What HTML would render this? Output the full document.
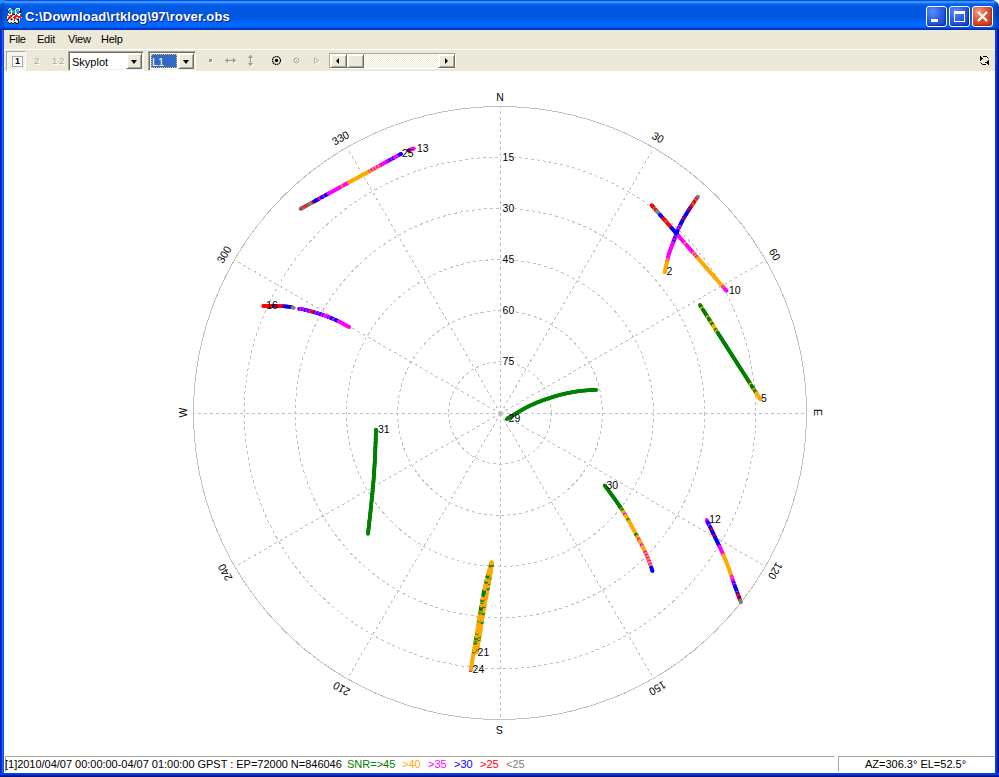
<!DOCTYPE html>
<html>
<head>
<meta charset="utf-8">
<title>rover.obs</title>
<style>
html,body{margin:0;padding:0;background:#fff;}
body{width:999px;height:777px;position:relative;overflow:hidden;font-family:"Liberation Sans",sans-serif;font-size:11px;color:#000;}
.abs{position:absolute;}
/* window frame */
#title{left:0;top:0;width:999px;height:30px;border-radius:7px 7px 0 0;
 background:linear-gradient(to bottom,#0a4ee0 0.5px,#3c92ff 1.5px,#3a94ff 2.5px,#0f72f8 3.5px,#0464f0 4.5px,#025ee8 5.5px,#005ae4 6.5px,#0058e1 7.5px,#0058e1 8.5px,#0058e1 9.5px,#0058e1 10.5px,#0058e1 11.5px,#0058e1 12.5px,#0058e1 13.5px,#0058e1 14.5px,#0058e1 15.5px,#0058e1 16.5px,#0058e1 17.5px,#005ae8 18.5px,#005ef0 19.5px,#0062f8 20.5px,#0066ff 21.5px,#0066ff 22.5px,#0066ff 23.5px,#0066ff 24.5px,#0066ff 25.5px,#0063fb 26.5px,#0054e8 27.5px,#003cd0 28.5px,#0030b4 29.5px);}
#title:after{content:"";position:absolute;left:0;top:0;width:999px;height:30px;border-radius:7px 7px 0 0;
 background:linear-gradient(to right,rgba(0,40,150,.55) 0px,rgba(0,40,150,0) 6px,rgba(0,40,150,0) 993px,rgba(0,30,130,.6) 999px);}
#bl{left:0;top:30px;width:4px;height:747px;background:linear-gradient(to right,#0019cf 0 1px,#0831d9 1px 2px,#166aee 2px 3px,#0855dd 3px 4px);}
#br{left:995px;top:30px;width:4px;height:747px;background:linear-gradient(to right,#0a40ea 0 1px,#0838e0 1px 2px,#0020b0 2px 3px,#00138c 3px 4px);}
#bb{left:0;top:773px;width:999px;height:4px;background:linear-gradient(to bottom,#0a40ea 0 1px,#0838e0 1px 2px,#0020b0 2px 3px,#00138c 3px 4px);}
#ttext{left:25px;top:8px;height:18px;line-height:18px;color:#fff;font-weight:bold;font-size:13px;white-space:nowrap;text-shadow:1px 1px 0 #0a1883;letter-spacing:0.18px;}
.cb{top:6px;width:21px;height:21px;box-sizing:border-box;border:1px solid #fff;border-radius:3px;
 background:radial-gradient(circle at 30% 25%,#5f8dff 0%,#2b5fe6 45%,#1a44c8 100%);box-shadow:inset -1px -1px 2px rgba(0,10,120,.6);}
#close{background:radial-gradient(circle at 30% 25%,#f0a088 0%,#dd5230 45%,#c23a12 100%);box-shadow:inset -1px -1px 2px rgba(120,20,0,.6);}
/* menu / toolbar */
#menu{left:4px;top:30px;width:991px;height:19px;background:#ece9d8;}
#menu span{position:absolute;top:3px;line-height:13px;letter-spacing:-0.25px;}
#wl{left:4px;top:49px;width:991px;height:1px;background:#fff;}
#tool{left:4px;top:50px;width:991px;height:21px;background:#ece9d8;}
.sunk{box-sizing:border-box;border:1px solid;border-color:#aca899 #fff #fff #aca899;}
.combo{box-sizing:border-box;background:#fff;border:1px solid;border-color:#aca899 #fff #fff #aca899;box-shadow:inset 1px 1px 0 #716f64,inset -1px -1px 0 #f1efe2;}
.btn3d{box-sizing:border-box;background:#ece9d8;border:1px solid;border-color:#fff #716f64 #716f64 #fff;box-shadow:inset 1px 1px 0 #fff,inset -1px -1px 0 #aca899;}
.dither{background-image:conic-gradient(#fff 25%,#ece9d8 0 50%,#fff 0 75%,#ece9d8 0);background-size:2px 2px;}
/* status */
#status{left:4px;top:756px;width:991px;height:17px;background:#fff;}
.sp{box-sizing:border-box;top:0;height:16px;border:1px solid;border-color:#aca899 #fff #fff #aca899;line-height:13px;white-space:nowrap;}
.st{top:2px;line-height:13px;white-space:nowrap;}
svg.plot{position:absolute;left:0;top:0;}
</style>
</head>
<body>
<svg class="plot" width="999" height="777" viewBox="0 0 999 777"><g shape-rendering="crispEdges"><circle cx="500" cy="413" r="255.83" fill="none" stroke="#c0c0c0" stroke-width="1" stroke-dasharray="3 3"/><circle cx="500" cy="413" r="204.67" fill="none" stroke="#c0c0c0" stroke-width="1" stroke-dasharray="3 3"/><circle cx="500" cy="413" r="153.50" fill="none" stroke="#c0c0c0" stroke-width="1" stroke-dasharray="3 3"/><circle cx="500" cy="413" r="102.33" fill="none" stroke="#c0c0c0" stroke-width="1" stroke-dasharray="3 3"/><circle cx="500" cy="413" r="51.17" fill="none" stroke="#c0c0c0" stroke-width="1" stroke-dasharray="3 3"/><line x1="500.5" y1="413.5" x2="500.50" y2="107.00" stroke="#c0c0c0" stroke-width="1" stroke-dasharray="3 3"/><line x1="500.5" y1="413.5" x2="653.75" y2="148.06" stroke="#c0c0c0" stroke-width="1" stroke-dasharray="3 3"/><line x1="500.5" y1="413.5" x2="765.94" y2="260.25" stroke="#c0c0c0" stroke-width="1" stroke-dasharray="3 3"/><line x1="500.5" y1="413.5" x2="807.00" y2="413.50" stroke="#c0c0c0" stroke-width="1" stroke-dasharray="3 3"/><line x1="500.5" y1="413.5" x2="765.94" y2="566.75" stroke="#c0c0c0" stroke-width="1" stroke-dasharray="3 3"/><line x1="500.5" y1="413.5" x2="653.75" y2="678.94" stroke="#c0c0c0" stroke-width="1" stroke-dasharray="3 3"/><line x1="500.5" y1="413.5" x2="500.50" y2="720.00" stroke="#c0c0c0" stroke-width="1" stroke-dasharray="3 3"/><line x1="500.5" y1="413.5" x2="347.25" y2="678.94" stroke="#c0c0c0" stroke-width="1" stroke-dasharray="3 3"/><line x1="500.5" y1="413.5" x2="235.06" y2="566.75" stroke="#c0c0c0" stroke-width="1" stroke-dasharray="3 3"/><line x1="500.5" y1="413.5" x2="194.00" y2="413.50" stroke="#c0c0c0" stroke-width="1" stroke-dasharray="3 3"/><line x1="500.5" y1="413.5" x2="235.06" y2="260.25" stroke="#c0c0c0" stroke-width="1" stroke-dasharray="3 3"/><line x1="500.5" y1="413.5" x2="347.25" y2="148.06" stroke="#c0c0c0" stroke-width="1" stroke-dasharray="3 3"/><circle cx="500" cy="413" r="306.5" fill="none" stroke="#c0c0c0" stroke-width="1"/></g><circle cx="500.5" cy="413.5" r="2.5" fill="#c0c0c0"/><g><circle cx="300.5" cy="208.9" r="1.9" fill="#808080"/><circle cx="301.2" cy="208.5" r="1.9" fill="#808080"/><circle cx="301.9" cy="208.1" r="1.9" fill="#ff0000"/><circle cx="302.6" cy="207.7" r="1.9" fill="#ff0000"/><circle cx="303.3" cy="207.4" r="1.9" fill="#808080"/><circle cx="304.0" cy="207.0" r="1.9" fill="#808080"/><circle cx="304.7" cy="206.6" r="1.9" fill="#ff0000"/><circle cx="305.4" cy="206.2" r="1.9" fill="#808080"/><circle cx="306.1" cy="205.8" r="1.9" fill="#ff0000"/><circle cx="306.8" cy="205.4" r="1.9" fill="#ff0000"/><circle cx="307.5" cy="205.0" r="1.9" fill="#808080"/><circle cx="308.2" cy="204.7" r="1.9" fill="#808080"/><circle cx="308.9" cy="204.3" r="1.9" fill="#ff0000"/><circle cx="309.6" cy="203.9" r="1.9" fill="#808080"/><circle cx="310.3" cy="203.5" r="1.9" fill="#808080"/><circle cx="311.1" cy="203.1" r="1.9" fill="#808080"/><circle cx="311.8" cy="202.7" r="1.9" fill="#808080"/><circle cx="312.5" cy="202.3" r="1.9" fill="#808080"/><circle cx="313.2" cy="202.0" r="1.9" fill="#ff0000"/><circle cx="313.9" cy="201.6" r="1.9" fill="#ff0000"/><circle cx="314.6" cy="201.2" r="1.9" fill="#0000ff"/><circle cx="315.3" cy="200.8" r="1.9" fill="#0000ff"/><circle cx="316.0" cy="200.4" r="1.9" fill="#0000ff"/><circle cx="316.7" cy="200.0" r="1.9" fill="#0000ff"/><circle cx="317.4" cy="199.7" r="1.9" fill="#0000ff"/><circle cx="318.1" cy="199.3" r="1.9" fill="#0000ff"/><circle cx="318.8" cy="198.9" r="1.9" fill="#0000ff"/><circle cx="319.5" cy="198.5" r="1.9" fill="#ff0000"/><circle cx="320.2" cy="198.1" r="1.9" fill="#ff00ff"/><circle cx="320.9" cy="197.7" r="1.9" fill="#ff00ff"/><circle cx="321.6" cy="197.3" r="1.9" fill="#0000ff"/><circle cx="322.3" cy="197.0" r="1.9" fill="#0000ff"/><circle cx="323.0" cy="196.6" r="1.9" fill="#0000ff"/><circle cx="323.7" cy="196.2" r="1.9" fill="#0000ff"/><circle cx="324.4" cy="195.8" r="1.9" fill="#ff00ff"/><circle cx="325.1" cy="195.4" r="1.9" fill="#ff00ff"/><circle cx="325.8" cy="195.0" r="1.9" fill="#0000ff"/><circle cx="326.5" cy="194.6" r="1.9" fill="#0000ff"/><circle cx="327.2" cy="194.3" r="1.9" fill="#0000ff"/><circle cx="327.9" cy="193.9" r="1.9" fill="#0000ff"/><circle cx="328.6" cy="193.5" r="1.9" fill="#ff00ff"/><circle cx="329.3" cy="193.1" r="1.9" fill="#ff00ff"/><circle cx="330.0" cy="192.7" r="1.9" fill="#ff00ff"/><circle cx="330.8" cy="192.3" r="1.9" fill="#ff00ff"/><circle cx="331.5" cy="191.9" r="1.9" fill="#ff00ff"/><circle cx="332.2" cy="191.6" r="1.9" fill="#ff00ff"/><circle cx="332.9" cy="191.2" r="1.9" fill="#ff00ff"/><circle cx="333.6" cy="190.8" r="1.9" fill="#ff00ff"/><circle cx="334.3" cy="190.4" r="1.9" fill="#ff00ff"/><circle cx="335.0" cy="190.0" r="1.9" fill="#ff00ff"/><circle cx="335.7" cy="189.6" r="1.9" fill="#ff00ff"/><circle cx="336.4" cy="189.2" r="1.9" fill="#ff00ff"/><circle cx="337.1" cy="188.9" r="1.9" fill="#ff00ff"/><circle cx="337.8" cy="188.5" r="1.9" fill="#ff00ff"/><circle cx="338.5" cy="188.1" r="1.9" fill="#ff00ff"/><circle cx="339.2" cy="187.7" r="1.9" fill="#ff00ff"/><circle cx="339.9" cy="187.3" r="1.9" fill="#ff00ff"/><circle cx="340.6" cy="186.9" r="1.9" fill="#ff00ff"/><circle cx="341.3" cy="186.6" r="1.9" fill="#ff00ff"/><circle cx="342.0" cy="186.2" r="1.9" fill="#ff00ff"/><circle cx="342.7" cy="185.8" r="1.9" fill="#ffaa00"/><circle cx="343.4" cy="185.4" r="1.9" fill="#ffaa00"/><circle cx="344.1" cy="185.0" r="1.9" fill="#ff00ff"/><circle cx="344.8" cy="184.6" r="1.9" fill="#ff00ff"/><circle cx="345.5" cy="184.2" r="1.9" fill="#ff00ff"/><circle cx="346.2" cy="183.9" r="1.9" fill="#ff00ff"/><circle cx="346.9" cy="183.5" r="1.9" fill="#ff00ff"/><circle cx="347.6" cy="183.1" r="1.9" fill="#ff00ff"/><circle cx="348.3" cy="182.7" r="1.9" fill="#ff00ff"/><circle cx="349.0" cy="182.3" r="1.9" fill="#ffaa00"/><circle cx="349.7" cy="181.9" r="1.9" fill="#ffaa00"/><circle cx="350.4" cy="181.5" r="1.9" fill="#ffaa00"/><circle cx="351.2" cy="181.2" r="1.9" fill="#ffaa00"/><circle cx="351.9" cy="180.8" r="1.9" fill="#ffaa00"/><circle cx="352.6" cy="180.4" r="1.9" fill="#ffaa00"/><circle cx="353.3" cy="180.0" r="1.9" fill="#ffaa00"/><circle cx="354.0" cy="179.6" r="1.9" fill="#ffaa00"/><circle cx="354.7" cy="179.2" r="1.9" fill="#ffaa00"/><circle cx="355.4" cy="178.8" r="1.9" fill="#ffaa00"/><circle cx="356.1" cy="178.5" r="1.9" fill="#ffaa00"/><circle cx="356.8" cy="178.1" r="1.9" fill="#ffaa00"/><circle cx="357.5" cy="177.7" r="1.9" fill="#ffaa00"/><circle cx="358.2" cy="177.3" r="1.9" fill="#ffaa00"/><circle cx="358.9" cy="176.9" r="1.9" fill="#ffaa00"/><circle cx="359.6" cy="176.5" r="1.9" fill="#ffaa00"/><circle cx="360.3" cy="176.1" r="1.9" fill="#ffaa00"/><circle cx="361.0" cy="175.8" r="1.9" fill="#ffaa00"/><circle cx="361.7" cy="175.4" r="1.9" fill="#ffaa00"/><circle cx="362.4" cy="175.0" r="1.9" fill="#ffaa00"/><circle cx="363.1" cy="174.6" r="1.9" fill="#ffaa00"/><circle cx="363.8" cy="174.2" r="1.9" fill="#ffaa00"/><circle cx="364.5" cy="173.8" r="1.9" fill="#ffaa00"/><circle cx="365.2" cy="173.5" r="1.9" fill="#ffaa00"/><circle cx="365.9" cy="173.1" r="1.9" fill="#ffaa00"/><circle cx="366.6" cy="172.7" r="1.9" fill="#ffaa00"/><circle cx="367.3" cy="172.3" r="1.9" fill="#ffaa00"/><circle cx="368.0" cy="171.9" r="1.9" fill="#ffaa00"/><circle cx="368.7" cy="171.5" r="1.9" fill="#ffaa00"/><circle cx="369.4" cy="171.1" r="1.9" fill="#ffaa00"/><circle cx="370.1" cy="170.8" r="1.9" fill="#ff00ff"/><circle cx="370.8" cy="170.4" r="1.9" fill="#ffaa00"/><circle cx="371.6" cy="170.0" r="1.9" fill="#ffaa00"/><circle cx="372.3" cy="169.6" r="1.9" fill="#ff00ff"/><circle cx="373.0" cy="169.2" r="1.9" fill="#ff00ff"/><circle cx="373.7" cy="168.8" r="1.9" fill="#ffaa00"/><circle cx="374.4" cy="168.4" r="1.9" fill="#ffaa00"/><circle cx="375.1" cy="168.1" r="1.9" fill="#ff00ff"/><circle cx="375.8" cy="167.7" r="1.9" fill="#ff00ff"/><circle cx="376.5" cy="167.3" r="1.9" fill="#ffaa00"/><circle cx="377.2" cy="166.9" r="1.9" fill="#ffaa00"/><circle cx="377.9" cy="166.5" r="1.9" fill="#ff00ff"/><circle cx="378.6" cy="166.1" r="1.9" fill="#ff00ff"/><circle cx="379.3" cy="165.7" r="1.9" fill="#ffaa00"/><circle cx="380.0" cy="165.4" r="1.9" fill="#ffaa00"/><circle cx="380.7" cy="165.0" r="1.9" fill="#ff00ff"/><circle cx="381.4" cy="164.6" r="1.9" fill="#ff00ff"/><circle cx="382.1" cy="164.2" r="1.9" fill="#ff00ff"/><circle cx="382.8" cy="163.8" r="1.9" fill="#ff00ff"/><circle cx="383.5" cy="163.4" r="1.9" fill="#ff00ff"/><circle cx="384.2" cy="163.0" r="1.9" fill="#ff00ff"/><circle cx="384.9" cy="162.7" r="1.9" fill="#ff00ff"/><circle cx="385.6" cy="162.3" r="1.9" fill="#ff00ff"/><circle cx="386.3" cy="161.9" r="1.9" fill="#ff00ff"/><circle cx="387.0" cy="161.5" r="1.9" fill="#ff00ff"/><circle cx="387.7" cy="161.1" r="1.9" fill="#ff00ff"/><circle cx="388.4" cy="160.7" r="1.9" fill="#0000ff"/><circle cx="389.1" cy="160.4" r="1.9" fill="#ff00ff"/><circle cx="389.8" cy="160.0" r="1.9" fill="#ff00ff"/><circle cx="390.5" cy="159.6" r="1.9" fill="#0000ff"/><circle cx="391.3" cy="159.2" r="1.9" fill="#0000ff"/><circle cx="392.0" cy="158.8" r="1.9" fill="#ff00ff"/><circle cx="392.7" cy="158.4" r="1.9" fill="#ff00ff"/><circle cx="393.4" cy="158.0" r="1.9" fill="#0000ff"/><circle cx="394.1" cy="157.7" r="1.9" fill="#0000ff"/><circle cx="394.8" cy="157.3" r="1.9" fill="#ff00ff"/><circle cx="395.5" cy="156.9" r="1.9" fill="#ff00ff"/><circle cx="396.2" cy="156.5" r="1.9" fill="#ff00ff"/><circle cx="396.9" cy="156.1" r="1.9" fill="#ff00ff"/><circle cx="397.6" cy="155.7" r="1.9" fill="#ff00ff"/><circle cx="398.3" cy="155.3" r="1.9" fill="#ff00ff"/><circle cx="399.0" cy="155.0" r="1.9" fill="#ff00ff"/><circle cx="399.7" cy="154.6" r="1.9" fill="#0000ff"/><circle cx="400.4" cy="154.2" r="1.9" fill="#0000ff"/><circle cx="401.1" cy="153.8" r="1.9" fill="#0000ff"/><circle cx="408.6" cy="150.4" r="1.9" fill="#0000ff"/><circle cx="409.4" cy="150.1" r="1.9" fill="#0000ff"/><circle cx="410.1" cy="149.8" r="1.9" fill="#ff0000"/><circle cx="410.9" cy="149.5" r="1.9" fill="#ff0000"/><circle cx="411.6" cy="149.3" r="1.9" fill="#ff00ff"/><circle cx="412.4" cy="149.0" r="1.9" fill="#ff00ff"/><circle cx="413.1" cy="148.7" r="1.9" fill="#ff00ff"/><circle cx="413.9" cy="148.4" r="1.9" fill="#ff00ff"/><circle cx="263.2" cy="306.0" r="1.9" fill="#ff0000"/><circle cx="264.0" cy="306.0" r="1.9" fill="#ff0000"/><circle cx="264.8" cy="306.0" r="1.9" fill="#ff0000"/><circle cx="265.6" cy="306.0" r="1.9" fill="#ff0000"/><circle cx="266.4" cy="306.0" r="1.9" fill="#ff0000"/><circle cx="267.2" cy="306.0" r="1.9" fill="#ff0000"/><circle cx="268.1" cy="306.0" r="1.9" fill="#ff0000"/><circle cx="268.9" cy="306.0" r="1.9" fill="#ff0000"/><circle cx="269.7" cy="306.0" r="1.9" fill="#ff0000"/><circle cx="270.5" cy="306.0" r="1.9" fill="#ff0000"/><circle cx="271.3" cy="306.0" r="1.9" fill="#ff0000"/><circle cx="272.1" cy="306.0" r="1.9" fill="#ff0000"/><circle cx="272.9" cy="306.0" r="1.9" fill="#ff0000"/><circle cx="273.7" cy="306.0" r="1.9" fill="#0000ff"/><circle cx="274.5" cy="306.0" r="1.9" fill="#0000ff"/><circle cx="275.3" cy="306.0" r="1.9" fill="#0000ff"/><circle cx="276.1" cy="306.1" r="1.9" fill="#ff0000"/><circle cx="277.0" cy="306.1" r="1.9" fill="#ff0000"/><circle cx="277.8" cy="306.1" r="1.9" fill="#ff0000"/><circle cx="278.6" cy="306.1" r="1.9" fill="#ff0000"/><circle cx="279.4" cy="306.1" r="1.9" fill="#ff0000"/><circle cx="280.2" cy="306.1" r="1.9" fill="#ff0000"/><circle cx="281.0" cy="306.2" r="1.9" fill="#ff0000"/><circle cx="281.8" cy="306.2" r="1.9" fill="#ff0000"/><circle cx="282.6" cy="306.2" r="1.9" fill="#ff0000"/><circle cx="283.4" cy="306.2" r="1.9" fill="#ff0000"/><circle cx="284.2" cy="306.3" r="1.9" fill="#0000ff"/><circle cx="285.0" cy="306.4" r="1.9" fill="#0000ff"/><circle cx="285.8" cy="306.4" r="1.9" fill="#0000ff"/><circle cx="286.6" cy="306.5" r="1.9" fill="#0000ff"/><circle cx="287.5" cy="306.6" r="1.9" fill="#0000ff"/><circle cx="288.3" cy="306.7" r="1.9" fill="#0000ff"/><circle cx="289.1" cy="306.8" r="1.9" fill="#0000ff"/><circle cx="289.9" cy="306.9" r="1.9" fill="#0000ff"/><circle cx="290.7" cy="307.0" r="1.9" fill="#0000ff"/><circle cx="291.4" cy="307.2" r="1.9" fill="#0000ff"/><circle cx="292.2" cy="307.4" r="1.9" fill="#ff0000"/><circle cx="293.0" cy="307.6" r="1.9" fill="#808080"/><circle cx="293.8" cy="307.8" r="1.9" fill="#808080"/><circle cx="299.2" cy="308.8" r="1.9" fill="#0000ff"/><circle cx="300.0" cy="308.9" r="1.9" fill="#0000ff"/><circle cx="300.8" cy="308.9" r="1.9" fill="#ff00ff"/><circle cx="301.6" cy="309.1" r="1.9" fill="#ff00ff"/><circle cx="302.4" cy="309.2" r="1.9" fill="#ff00ff"/><circle cx="303.1" cy="309.4" r="1.9" fill="#0000ff"/><circle cx="303.9" cy="309.6" r="1.9" fill="#ff00ff"/><circle cx="304.7" cy="309.8" r="1.9" fill="#ff00ff"/><circle cx="305.5" cy="309.9" r="1.9" fill="#0000ff"/><circle cx="306.2" cy="310.1" r="1.9" fill="#0000ff"/><circle cx="307.0" cy="310.3" r="1.9" fill="#ff00ff"/><circle cx="307.8" cy="310.5" r="1.9" fill="#ff00ff"/><circle cx="308.6" cy="310.7" r="1.9" fill="#0000ff"/><circle cx="309.3" cy="310.9" r="1.9" fill="#0000ff"/><circle cx="310.1" cy="311.1" r="1.9" fill="#ff00ff"/><circle cx="310.9" cy="311.3" r="1.9" fill="#ff00ff"/><circle cx="311.7" cy="311.5" r="1.9" fill="#ff0000"/><circle cx="312.4" cy="311.7" r="1.9" fill="#ff0000"/><circle cx="313.2" cy="311.9" r="1.9" fill="#ff0000"/><circle cx="314.0" cy="312.1" r="1.9" fill="#ff0000"/><circle cx="314.7" cy="312.4" r="1.9" fill="#0000ff"/><circle cx="315.5" cy="312.6" r="1.9" fill="#0000ff"/><circle cx="316.3" cy="312.8" r="1.9" fill="#ff00ff"/><circle cx="317.0" cy="313.0" r="1.9" fill="#ff00ff"/><circle cx="317.8" cy="313.3" r="1.9" fill="#0000ff"/><circle cx="318.5" cy="313.5" r="1.9" fill="#0000ff"/><circle cx="319.3" cy="313.7" r="1.9" fill="#ff00ff"/><circle cx="320.1" cy="314.0" r="1.9" fill="#ff00ff"/><circle cx="320.8" cy="314.2" r="1.9" fill="#0000ff"/><circle cx="321.6" cy="314.5" r="1.9" fill="#0000ff"/><circle cx="322.3" cy="314.7" r="1.9" fill="#ff00ff"/><circle cx="323.1" cy="315.0" r="1.9" fill="#ff00ff"/><circle cx="323.8" cy="315.2" r="1.9" fill="#0000ff"/><circle cx="324.6" cy="315.5" r="1.9" fill="#ff00ff"/><circle cx="325.3" cy="315.8" r="1.9" fill="#ff00ff"/><circle cx="326.1" cy="316.0" r="1.9" fill="#ff00ff"/><circle cx="326.8" cy="316.3" r="1.9" fill="#ff00ff"/><circle cx="327.6" cy="316.6" r="1.9" fill="#ff00ff"/><circle cx="328.3" cy="316.9" r="1.9" fill="#ff00ff"/><circle cx="329.1" cy="317.2" r="1.9" fill="#0000ff"/><circle cx="329.8" cy="317.5" r="1.9" fill="#ff00ff"/><circle cx="330.5" cy="317.8" r="1.9" fill="#ff00ff"/><circle cx="331.3" cy="318.1" r="1.9" fill="#0000ff"/><circle cx="332.0" cy="318.4" r="1.9" fill="#0000ff"/><circle cx="332.8" cy="318.7" r="1.9" fill="#0000ff"/><circle cx="333.5" cy="319.0" r="1.9" fill="#0000ff"/><circle cx="334.2" cy="319.3" r="1.9" fill="#ff00ff"/><circle cx="335.0" cy="319.6" r="1.9" fill="#ff00ff"/><circle cx="335.7" cy="320.0" r="1.9" fill="#0000ff"/><circle cx="336.4" cy="320.3" r="1.9" fill="#0000ff"/><circle cx="337.1" cy="320.6" r="1.9" fill="#0000ff"/><circle cx="337.9" cy="321.0" r="1.9" fill="#0000ff"/><circle cx="338.6" cy="321.3" r="1.9" fill="#ff00ff"/><circle cx="339.3" cy="321.7" r="1.9" fill="#ff00ff"/><circle cx="340.0" cy="322.0" r="1.9" fill="#ff00ff"/><circle cx="340.7" cy="322.4" r="1.9" fill="#ff00ff"/><circle cx="341.4" cy="322.8" r="1.9" fill="#ff00ff"/><circle cx="342.1" cy="323.1" r="1.9" fill="#ff00ff"/><circle cx="342.8" cy="323.5" r="1.9" fill="#ff00ff"/><circle cx="343.5" cy="323.9" r="1.9" fill="#ff00ff"/><circle cx="344.2" cy="324.3" r="1.9" fill="#ff00ff"/><circle cx="344.9" cy="324.7" r="1.9" fill="#ff00ff"/><circle cx="345.6" cy="325.1" r="1.9" fill="#ff00ff"/><circle cx="346.3" cy="325.5" r="1.9" fill="#ff00ff"/><circle cx="347.0" cy="325.8" r="1.9" fill="#ff00ff"/><circle cx="347.7" cy="326.2" r="1.9" fill="#ff00ff"/><circle cx="348.4" cy="326.6" r="1.9" fill="#ff00ff"/><circle cx="349.1" cy="327.0" r="1.9" fill="#ff00ff"/><circle cx="697.9" cy="196.6" r="1.9" fill="#808080"/><circle cx="697.4" cy="197.2" r="1.9" fill="#808080"/><circle cx="696.9" cy="197.9" r="1.9" fill="#808080"/><circle cx="696.5" cy="198.5" r="1.9" fill="#808080"/><circle cx="696.0" cy="199.2" r="1.9" fill="#ff0000"/><circle cx="695.5" cy="199.8" r="1.9" fill="#ff0000"/><circle cx="695.1" cy="200.5" r="1.9" fill="#808080"/><circle cx="694.6" cy="201.2" r="1.9" fill="#808080"/><circle cx="694.2" cy="201.8" r="1.9" fill="#ff0000"/><circle cx="693.7" cy="202.5" r="1.9" fill="#ff0000"/><circle cx="693.3" cy="203.2" r="1.9" fill="#ff0000"/><circle cx="692.8" cy="203.8" r="1.9" fill="#ff0000"/><circle cx="692.4" cy="204.5" r="1.9" fill="#808080"/><circle cx="692.0" cy="205.2" r="1.9" fill="#808080"/><circle cx="691.5" cy="205.8" r="1.9" fill="#ff0000"/><circle cx="691.1" cy="206.5" r="1.9" fill="#ff0000"/><circle cx="690.6" cy="207.2" r="1.9" fill="#ff0000"/><circle cx="690.2" cy="207.8" r="1.9" fill="#ff0000"/><circle cx="689.7" cy="208.5" r="1.9" fill="#0000ff"/><circle cx="689.3" cy="209.2" r="1.9" fill="#0000ff"/><circle cx="688.9" cy="209.9" r="1.9" fill="#ff0000"/><circle cx="688.4" cy="210.5" r="1.9" fill="#ff0000"/><circle cx="688.0" cy="211.2" r="1.9" fill="#0000ff"/><circle cx="687.6" cy="211.9" r="1.9" fill="#0000ff"/><circle cx="687.1" cy="212.6" r="1.9" fill="#ff0000"/><circle cx="686.7" cy="213.2" r="1.9" fill="#0000ff"/><circle cx="686.3" cy="213.9" r="1.9" fill="#0000ff"/><circle cx="685.9" cy="214.6" r="1.9" fill="#0000ff"/><circle cx="685.5" cy="215.3" r="1.9" fill="#0000ff"/><circle cx="685.1" cy="216.0" r="1.9" fill="#0000ff"/><circle cx="684.6" cy="216.7" r="1.9" fill="#0000ff"/><circle cx="684.2" cy="217.4" r="1.9" fill="#ff0000"/><circle cx="683.8" cy="218.0" r="1.9" fill="#0000ff"/><circle cx="683.4" cy="218.7" r="1.9" fill="#0000ff"/><circle cx="683.0" cy="219.4" r="1.9" fill="#ff0000"/><circle cx="682.6" cy="220.2" r="1.9" fill="#ff0000"/><circle cx="682.3" cy="220.9" r="1.9" fill="#0000ff"/><circle cx="681.9" cy="221.6" r="1.9" fill="#0000ff"/><circle cx="681.6" cy="222.3" r="1.9" fill="#0000ff"/><circle cx="681.2" cy="223.0" r="1.9" fill="#0000ff"/><circle cx="680.8" cy="223.7" r="1.9" fill="#0000ff"/><circle cx="680.5" cy="224.5" r="1.9" fill="#0000ff"/><circle cx="680.1" cy="225.2" r="1.9" fill="#0000ff"/><circle cx="679.8" cy="225.9" r="1.9" fill="#0000ff"/><circle cx="679.4" cy="226.6" r="1.9" fill="#ff00ff"/><circle cx="679.1" cy="227.3" r="1.9" fill="#ff00ff"/><circle cx="678.7" cy="228.1" r="1.9" fill="#0000ff"/><circle cx="678.4" cy="228.8" r="1.9" fill="#0000ff"/><circle cx="678.1" cy="229.5" r="1.9" fill="#ff00ff"/><circle cx="677.8" cy="230.3" r="1.9" fill="#ff00ff"/><circle cx="677.5" cy="231.0" r="1.9" fill="#0000ff"/><circle cx="677.3" cy="231.8" r="1.9" fill="#0000ff"/><circle cx="677.0" cy="232.5" r="1.9" fill="#0000ff"/><circle cx="676.7" cy="233.3" r="1.9" fill="#0000ff"/><circle cx="676.4" cy="234.0" r="1.9" fill="#0000ff"/><circle cx="676.1" cy="234.8" r="1.9" fill="#0000ff"/><circle cx="675.8" cy="235.5" r="1.9" fill="#0000ff"/><circle cx="675.5" cy="236.3" r="1.9" fill="#0000ff"/><circle cx="675.2" cy="237.0" r="1.9" fill="#ff00ff"/><circle cx="674.9" cy="237.8" r="1.9" fill="#ff00ff"/><circle cx="674.6" cy="238.5" r="1.9" fill="#0000ff"/><circle cx="674.3" cy="239.3" r="1.9" fill="#0000ff"/><circle cx="674.0" cy="240.0" r="1.9" fill="#ff00ff"/><circle cx="673.7" cy="240.8" r="1.9" fill="#ff00ff"/><circle cx="673.5" cy="241.5" r="1.9" fill="#0000ff"/><circle cx="673.2" cy="242.3" r="1.9" fill="#0000ff"/><circle cx="672.9" cy="243.0" r="1.9" fill="#ff00ff"/><circle cx="672.6" cy="243.8" r="1.9" fill="#ff00ff"/><circle cx="672.3" cy="244.5" r="1.9" fill="#ff00ff"/><circle cx="672.0" cy="245.3" r="1.9" fill="#ff00ff"/><circle cx="671.8" cy="246.0" r="1.9" fill="#ff00ff"/><circle cx="671.5" cy="246.8" r="1.9" fill="#ff00ff"/><circle cx="671.2" cy="247.5" r="1.9" fill="#ff00ff"/><circle cx="670.9" cy="248.3" r="1.9" fill="#ff00ff"/><circle cx="670.6" cy="249.0" r="1.9" fill="#ff00ff"/><circle cx="670.4" cy="249.8" r="1.9" fill="#ff00ff"/><circle cx="670.1" cy="250.5" r="1.9" fill="#ff00ff"/><circle cx="669.8" cy="251.3" r="1.9" fill="#ff00ff"/><circle cx="669.5" cy="252.0" r="1.9" fill="#ff00ff"/><circle cx="669.3" cy="252.8" r="1.9" fill="#ff00ff"/><circle cx="669.0" cy="253.5" r="1.9" fill="#ff00ff"/><circle cx="668.8" cy="254.3" r="1.9" fill="#ff00ff"/><circle cx="668.5" cy="255.1" r="1.9" fill="#ff00ff"/><circle cx="668.4" cy="255.9" r="1.9" fill="#ff00ff"/><circle cx="668.2" cy="256.6" r="1.9" fill="#ff00ff"/><circle cx="668.0" cy="257.4" r="1.9" fill="#ff00ff"/><circle cx="667.8" cy="258.2" r="1.9" fill="#ff00ff"/><circle cx="667.7" cy="259.0" r="1.9" fill="#ff00ff"/><circle cx="667.5" cy="259.8" r="1.9" fill="#ffaa00"/><circle cx="667.3" cy="260.6" r="1.9" fill="#ffaa00"/><circle cx="667.1" cy="261.3" r="1.9" fill="#ff00ff"/><circle cx="667.0" cy="262.1" r="1.9" fill="#ffaa00"/><circle cx="666.8" cy="262.9" r="1.9" fill="#ffaa00"/><circle cx="666.6" cy="263.7" r="1.9" fill="#ffaa00"/><circle cx="666.4" cy="264.5" r="1.9" fill="#ffaa00"/><circle cx="666.2" cy="265.2" r="1.9" fill="#ffaa00"/><circle cx="666.0" cy="266.0" r="1.9" fill="#ffaa00"/><circle cx="665.8" cy="266.8" r="1.9" fill="#ffaa00"/><circle cx="665.6" cy="267.6" r="1.9" fill="#ffaa00"/><circle cx="665.4" cy="268.3" r="1.9" fill="#ffaa00"/><circle cx="665.2" cy="269.1" r="1.9" fill="#ffaa00"/><circle cx="665.1" cy="269.9" r="1.9" fill="#ffaa00"/><circle cx="665.0" cy="270.7" r="1.9" fill="#ffaa00"/><circle cx="664.8" cy="271.5" r="1.9" fill="#ffaa00"/><circle cx="664.7" cy="272.3" r="1.9" fill="#ffaa00"/><circle cx="651.6" cy="205.1" r="1.9" fill="#ff0000"/><circle cx="652.1" cy="205.7" r="1.9" fill="#ff0000"/><circle cx="652.7" cy="206.3" r="1.9" fill="#ff0000"/><circle cx="653.2" cy="206.9" r="1.9" fill="#ff0000"/><circle cx="653.7" cy="207.5" r="1.9" fill="#ff0000"/><circle cx="654.2" cy="208.1" r="1.9" fill="#ff0000"/><circle cx="654.8" cy="208.7" r="1.9" fill="#808080"/><circle cx="655.3" cy="209.3" r="1.9" fill="#808080"/><circle cx="655.8" cy="209.9" r="1.9" fill="#ff0000"/><circle cx="656.3" cy="210.5" r="1.9" fill="#ff0000"/><circle cx="656.9" cy="211.1" r="1.9" fill="#808080"/><circle cx="657.4" cy="211.7" r="1.9" fill="#808080"/><circle cx="657.9" cy="212.3" r="1.9" fill="#808080"/><circle cx="658.5" cy="212.9" r="1.9" fill="#808080"/><circle cx="659.0" cy="213.5" r="1.9" fill="#808080"/><circle cx="659.5" cy="214.2" r="1.9" fill="#808080"/><circle cx="660.0" cy="214.8" r="1.9" fill="#0000ff"/><circle cx="660.6" cy="215.4" r="1.9" fill="#0000ff"/><circle cx="661.1" cy="216.0" r="1.9" fill="#0000ff"/><circle cx="661.6" cy="216.6" r="1.9" fill="#0000ff"/><circle cx="662.1" cy="217.2" r="1.9" fill="#0000ff"/><circle cx="662.7" cy="217.8" r="1.9" fill="#0000ff"/><circle cx="663.2" cy="218.4" r="1.9" fill="#ff0000"/><circle cx="663.7" cy="219.0" r="1.9" fill="#ff0000"/><circle cx="664.3" cy="219.6" r="1.9" fill="#ff0000"/><circle cx="664.8" cy="220.2" r="1.9" fill="#ff0000"/><circle cx="665.3" cy="220.8" r="1.9" fill="#ff0000"/><circle cx="665.8" cy="221.4" r="1.9" fill="#ff0000"/><circle cx="666.4" cy="222.0" r="1.9" fill="#808080"/><circle cx="666.9" cy="222.6" r="1.9" fill="#808080"/><circle cx="667.4" cy="223.2" r="1.9" fill="#ff0000"/><circle cx="668.0" cy="223.8" r="1.9" fill="#ff0000"/><circle cx="668.5" cy="224.4" r="1.9" fill="#ff0000"/><circle cx="669.0" cy="225.0" r="1.9" fill="#ff0000"/><circle cx="669.5" cy="225.6" r="1.9" fill="#ff0000"/><circle cx="670.1" cy="226.2" r="1.9" fill="#ff0000"/><circle cx="670.6" cy="226.8" r="1.9" fill="#ff0000"/><circle cx="671.1" cy="227.4" r="1.9" fill="#ff0000"/><circle cx="671.6" cy="228.0" r="1.9" fill="#0000ff"/><circle cx="672.2" cy="228.6" r="1.9" fill="#0000ff"/><circle cx="672.7" cy="229.2" r="1.9" fill="#0000ff"/><circle cx="673.2" cy="229.8" r="1.9" fill="#0000ff"/><circle cx="673.8" cy="230.4" r="1.9" fill="#0000ff"/><circle cx="674.3" cy="231.1" r="1.9" fill="#0000ff"/><circle cx="674.8" cy="231.7" r="1.9" fill="#0000ff"/><circle cx="675.3" cy="232.3" r="1.9" fill="#0000ff"/><circle cx="675.9" cy="232.9" r="1.9" fill="#0000ff"/><circle cx="676.4" cy="233.5" r="1.9" fill="#0000ff"/><circle cx="676.9" cy="234.1" r="1.9" fill="#0000ff"/><circle cx="677.4" cy="234.7" r="1.9" fill="#0000ff"/><circle cx="678.0" cy="235.3" r="1.9" fill="#0000ff"/><circle cx="678.5" cy="235.9" r="1.9" fill="#ff00ff"/><circle cx="679.0" cy="236.5" r="1.9" fill="#ff00ff"/><circle cx="679.6" cy="237.1" r="1.9" fill="#ff00ff"/><circle cx="680.1" cy="237.7" r="1.9" fill="#ff00ff"/><circle cx="680.6" cy="238.3" r="1.9" fill="#ff00ff"/><circle cx="681.1" cy="238.9" r="1.9" fill="#ff00ff"/><circle cx="681.7" cy="239.5" r="1.9" fill="#ff00ff"/><circle cx="682.2" cy="240.1" r="1.9" fill="#ff00ff"/><circle cx="682.7" cy="240.7" r="1.9" fill="#ff00ff"/><circle cx="683.2" cy="241.3" r="1.9" fill="#ff00ff"/><circle cx="683.8" cy="241.9" r="1.9" fill="#ff00ff"/><circle cx="684.3" cy="242.5" r="1.9" fill="#ff00ff"/><circle cx="684.8" cy="243.1" r="1.9" fill="#ff00ff"/><circle cx="685.4" cy="243.7" r="1.9" fill="#ffaa00"/><circle cx="685.9" cy="244.3" r="1.9" fill="#ffaa00"/><circle cx="686.4" cy="244.9" r="1.9" fill="#ff00ff"/><circle cx="686.9" cy="245.5" r="1.9" fill="#ff00ff"/><circle cx="687.5" cy="246.1" r="1.9" fill="#ff00ff"/><circle cx="688.0" cy="246.7" r="1.9" fill="#ff00ff"/><circle cx="688.5" cy="247.3" r="1.9" fill="#ff00ff"/><circle cx="689.0" cy="247.9" r="1.9" fill="#ff00ff"/><circle cx="689.6" cy="248.6" r="1.9" fill="#ff00ff"/><circle cx="690.1" cy="249.2" r="1.9" fill="#ff00ff"/><circle cx="690.6" cy="249.8" r="1.9" fill="#ff00ff"/><circle cx="691.2" cy="250.4" r="1.9" fill="#ff00ff"/><circle cx="691.7" cy="251.0" r="1.9" fill="#ff00ff"/><circle cx="692.2" cy="251.6" r="1.9" fill="#ff00ff"/><circle cx="692.7" cy="252.2" r="1.9" fill="#ff00ff"/><circle cx="693.3" cy="252.8" r="1.9" fill="#ff00ff"/><circle cx="693.8" cy="253.4" r="1.9" fill="#ffaa00"/><circle cx="694.3" cy="254.0" r="1.9" fill="#ffaa00"/><circle cx="694.9" cy="254.6" r="1.9" fill="#ff00ff"/><circle cx="695.4" cy="255.2" r="1.9" fill="#ff00ff"/><circle cx="695.9" cy="255.8" r="1.9" fill="#ffaa00"/><circle cx="696.4" cy="256.4" r="1.9" fill="#ffaa00"/><circle cx="697.0" cy="257.0" r="1.9" fill="#ff00ff"/><circle cx="697.5" cy="257.6" r="1.9" fill="#ff00ff"/><circle cx="698.0" cy="258.2" r="1.9" fill="#ffaa00"/><circle cx="698.5" cy="258.8" r="1.9" fill="#ffaa00"/><circle cx="699.1" cy="259.4" r="1.9" fill="#ffaa00"/><circle cx="699.6" cy="260.0" r="1.9" fill="#ffaa00"/><circle cx="700.1" cy="260.6" r="1.9" fill="#ffaa00"/><circle cx="700.7" cy="261.2" r="1.9" fill="#ffaa00"/><circle cx="701.2" cy="261.8" r="1.9" fill="#ffaa00"/><circle cx="701.7" cy="262.4" r="1.9" fill="#ffaa00"/><circle cx="702.2" cy="263.0" r="1.9" fill="#ffaa00"/><circle cx="702.8" cy="263.6" r="1.9" fill="#ffaa00"/><circle cx="703.3" cy="264.2" r="1.9" fill="#ffaa00"/><circle cx="703.8" cy="264.8" r="1.9" fill="#ffaa00"/><circle cx="704.3" cy="265.5" r="1.9" fill="#ffaa00"/><circle cx="704.9" cy="266.1" r="1.9" fill="#ffaa00"/><circle cx="705.4" cy="266.7" r="1.9" fill="#ffaa00"/><circle cx="705.9" cy="267.3" r="1.9" fill="#ffaa00"/><circle cx="706.5" cy="267.9" r="1.9" fill="#ffaa00"/><circle cx="707.0" cy="268.5" r="1.9" fill="#ffaa00"/><circle cx="707.5" cy="269.1" r="1.9" fill="#ffaa00"/><circle cx="708.0" cy="269.7" r="1.9" fill="#ffaa00"/><circle cx="708.6" cy="270.3" r="1.9" fill="#ffaa00"/><circle cx="709.1" cy="270.9" r="1.9" fill="#ffaa00"/><circle cx="709.6" cy="271.5" r="1.9" fill="#ffaa00"/><circle cx="710.1" cy="272.1" r="1.9" fill="#ffaa00"/><circle cx="710.7" cy="272.7" r="1.9" fill="#ffaa00"/><circle cx="711.2" cy="273.3" r="1.9" fill="#ffaa00"/><circle cx="711.7" cy="273.9" r="1.9" fill="#ffaa00"/><circle cx="712.3" cy="274.5" r="1.9" fill="#ffaa00"/><circle cx="712.8" cy="275.1" r="1.9" fill="#ffaa00"/><circle cx="713.3" cy="275.7" r="1.9" fill="#ffaa00"/><circle cx="713.8" cy="276.3" r="1.9" fill="#ffaa00"/><circle cx="714.4" cy="276.9" r="1.9" fill="#ffaa00"/><circle cx="714.9" cy="277.5" r="1.9" fill="#ffaa00"/><circle cx="715.4" cy="278.1" r="1.9" fill="#ffaa00"/><circle cx="716.0" cy="278.7" r="1.9" fill="#ffaa00"/><circle cx="716.5" cy="279.3" r="1.9" fill="#ffaa00"/><circle cx="717.0" cy="279.9" r="1.9" fill="#ffaa00"/><circle cx="717.5" cy="280.5" r="1.9" fill="#ffaa00"/><circle cx="718.1" cy="281.1" r="1.9" fill="#ffaa00"/><circle cx="718.6" cy="281.7" r="1.9" fill="#ffaa00"/><circle cx="719.1" cy="282.4" r="1.9" fill="#ffaa00"/><circle cx="719.6" cy="283.0" r="1.9" fill="#ffaa00"/><circle cx="720.2" cy="283.6" r="1.9" fill="#ffaa00"/><circle cx="720.7" cy="284.2" r="1.9" fill="#ffaa00"/><circle cx="721.2" cy="284.8" r="1.9" fill="#ffaa00"/><circle cx="721.8" cy="285.4" r="1.9" fill="#ffaa00"/><circle cx="722.3" cy="286.0" r="1.9" fill="#ffaa00"/><circle cx="722.8" cy="286.6" r="1.9" fill="#ffaa00"/><circle cx="723.3" cy="287.2" r="1.9" fill="#ff00ff"/><circle cx="723.9" cy="287.8" r="1.9" fill="#ff00ff"/><circle cx="724.4" cy="288.4" r="1.9" fill="#ffaa00"/><circle cx="724.9" cy="289.0" r="1.9" fill="#ff00ff"/><circle cx="725.4" cy="289.6" r="1.9" fill="#ff00ff"/><circle cx="726.0" cy="290.2" r="1.9" fill="#ff00ff"/><circle cx="726.5" cy="290.8" r="1.9" fill="#ff00ff"/><circle cx="700.0" cy="305.0" r="1.9" fill="#008000"/><circle cx="700.4" cy="305.7" r="1.9" fill="#008000"/><circle cx="700.9" cy="306.3" r="1.9" fill="#008000"/><circle cx="701.3" cy="307.0" r="1.9" fill="#008000"/><circle cx="701.7" cy="307.7" r="1.9" fill="#008000"/><circle cx="702.1" cy="308.4" r="1.9" fill="#ffaa00"/><circle cx="702.6" cy="309.0" r="1.9" fill="#ffaa00"/><circle cx="703.0" cy="309.7" r="1.9" fill="#008000"/><circle cx="703.4" cy="310.4" r="1.9" fill="#008000"/><circle cx="703.9" cy="311.1" r="1.9" fill="#008000"/><circle cx="704.3" cy="311.7" r="1.9" fill="#008000"/><circle cx="704.7" cy="312.4" r="1.9" fill="#008000"/><circle cx="705.2" cy="313.1" r="1.9" fill="#008000"/><circle cx="705.6" cy="313.7" r="1.9" fill="#008000"/><circle cx="706.0" cy="314.4" r="1.9" fill="#008000"/><circle cx="706.5" cy="315.1" r="1.9" fill="#008000"/><circle cx="706.9" cy="315.8" r="1.9" fill="#008000"/><circle cx="707.3" cy="316.4" r="1.9" fill="#008000"/><circle cx="707.7" cy="317.1" r="1.9" fill="#ffaa00"/><circle cx="708.2" cy="317.8" r="1.9" fill="#ffaa00"/><circle cx="708.6" cy="318.5" r="1.9" fill="#008000"/><circle cx="709.0" cy="319.1" r="1.9" fill="#008000"/><circle cx="709.5" cy="319.8" r="1.9" fill="#008000"/><circle cx="709.9" cy="320.5" r="1.9" fill="#008000"/><circle cx="710.3" cy="321.1" r="1.9" fill="#008000"/><circle cx="710.8" cy="321.8" r="1.9" fill="#008000"/><circle cx="711.2" cy="322.5" r="1.9" fill="#ffaa00"/><circle cx="711.6" cy="323.2" r="1.9" fill="#ffaa00"/><circle cx="712.0" cy="323.8" r="1.9" fill="#008000"/><circle cx="712.5" cy="324.5" r="1.9" fill="#008000"/><circle cx="712.9" cy="325.2" r="1.9" fill="#008000"/><circle cx="713.3" cy="325.9" r="1.9" fill="#ffaa00"/><circle cx="713.8" cy="326.5" r="1.9" fill="#ffaa00"/><circle cx="714.2" cy="327.2" r="1.9" fill="#ffaa00"/><circle cx="714.6" cy="327.9" r="1.9" fill="#ffaa00"/><circle cx="715.0" cy="328.6" r="1.9" fill="#ffaa00"/><circle cx="715.5" cy="329.2" r="1.9" fill="#ffaa00"/><circle cx="715.9" cy="329.9" r="1.9" fill="#008000"/><circle cx="716.3" cy="330.6" r="1.9" fill="#008000"/><circle cx="716.8" cy="331.2" r="1.9" fill="#ffaa00"/><circle cx="717.2" cy="331.9" r="1.9" fill="#ffaa00"/><circle cx="717.6" cy="332.6" r="1.9" fill="#008000"/><circle cx="718.1" cy="333.3" r="1.9" fill="#008000"/><circle cx="718.5" cy="333.9" r="1.9" fill="#008000"/><circle cx="718.9" cy="334.6" r="1.9" fill="#008000"/><circle cx="719.4" cy="335.3" r="1.9" fill="#008000"/><circle cx="719.8" cy="336.0" r="1.9" fill="#008000"/><circle cx="720.2" cy="336.6" r="1.9" fill="#008000"/><circle cx="720.6" cy="337.3" r="1.9" fill="#008000"/><circle cx="721.1" cy="338.0" r="1.9" fill="#008000"/><circle cx="721.5" cy="338.6" r="1.9" fill="#008000"/><circle cx="721.9" cy="339.3" r="1.9" fill="#008000"/><circle cx="722.4" cy="340.0" r="1.9" fill="#008000"/><circle cx="722.8" cy="340.7" r="1.9" fill="#008000"/><circle cx="723.2" cy="341.3" r="1.9" fill="#008000"/><circle cx="723.6" cy="342.0" r="1.9" fill="#008000"/><circle cx="724.1" cy="342.7" r="1.9" fill="#008000"/><circle cx="724.5" cy="343.4" r="1.9" fill="#008000"/><circle cx="724.9" cy="344.0" r="1.9" fill="#008000"/><circle cx="725.4" cy="344.7" r="1.9" fill="#008000"/><circle cx="725.8" cy="345.4" r="1.9" fill="#008000"/><circle cx="726.2" cy="346.0" r="1.9" fill="#008000"/><circle cx="726.7" cy="346.7" r="1.9" fill="#008000"/><circle cx="727.1" cy="347.4" r="1.9" fill="#008000"/><circle cx="727.5" cy="348.1" r="1.9" fill="#008000"/><circle cx="728.0" cy="348.7" r="1.9" fill="#008000"/><circle cx="728.4" cy="349.4" r="1.9" fill="#008000"/><circle cx="728.8" cy="350.1" r="1.9" fill="#008000"/><circle cx="729.2" cy="350.8" r="1.9" fill="#008000"/><circle cx="729.7" cy="351.4" r="1.9" fill="#008000"/><circle cx="730.1" cy="352.1" r="1.9" fill="#008000"/><circle cx="730.5" cy="352.8" r="1.9" fill="#008000"/><circle cx="731.0" cy="353.4" r="1.9" fill="#008000"/><circle cx="731.4" cy="354.1" r="1.9" fill="#008000"/><circle cx="731.8" cy="354.8" r="1.9" fill="#008000"/><circle cx="732.2" cy="355.5" r="1.9" fill="#008000"/><circle cx="732.7" cy="356.1" r="1.9" fill="#008000"/><circle cx="733.1" cy="356.8" r="1.9" fill="#008000"/><circle cx="733.5" cy="357.5" r="1.9" fill="#008000"/><circle cx="734.0" cy="358.2" r="1.9" fill="#008000"/><circle cx="734.4" cy="358.8" r="1.9" fill="#008000"/><circle cx="734.8" cy="359.5" r="1.9" fill="#008000"/><circle cx="735.3" cy="360.2" r="1.9" fill="#008000"/><circle cx="735.7" cy="360.8" r="1.9" fill="#008000"/><circle cx="736.1" cy="361.5" r="1.9" fill="#008000"/><circle cx="736.6" cy="362.2" r="1.9" fill="#008000"/><circle cx="737.0" cy="362.9" r="1.9" fill="#008000"/><circle cx="737.4" cy="363.5" r="1.9" fill="#008000"/><circle cx="737.8" cy="364.2" r="1.9" fill="#008000"/><circle cx="738.3" cy="364.9" r="1.9" fill="#008000"/><circle cx="738.7" cy="365.6" r="1.9" fill="#008000"/><circle cx="739.1" cy="366.2" r="1.9" fill="#008000"/><circle cx="739.6" cy="366.9" r="1.9" fill="#008000"/><circle cx="740.0" cy="367.6" r="1.9" fill="#008000"/><circle cx="740.4" cy="368.2" r="1.9" fill="#008000"/><circle cx="740.9" cy="368.9" r="1.9" fill="#008000"/><circle cx="741.3" cy="369.6" r="1.9" fill="#008000"/><circle cx="741.7" cy="370.3" r="1.9" fill="#008000"/><circle cx="742.1" cy="370.9" r="1.9" fill="#008000"/><circle cx="742.6" cy="371.6" r="1.9" fill="#008000"/><circle cx="743.0" cy="372.3" r="1.9" fill="#008000"/><circle cx="743.4" cy="373.0" r="1.9" fill="#008000"/><circle cx="743.9" cy="373.6" r="1.9" fill="#008000"/><circle cx="744.3" cy="374.3" r="1.9" fill="#008000"/><circle cx="744.7" cy="375.0" r="1.9" fill="#008000"/><circle cx="745.2" cy="375.6" r="1.9" fill="#008000"/><circle cx="745.6" cy="376.3" r="1.9" fill="#008000"/><circle cx="746.0" cy="377.0" r="1.9" fill="#008000"/><circle cx="746.4" cy="377.7" r="1.9" fill="#008000"/><circle cx="746.9" cy="378.3" r="1.9" fill="#008000"/><circle cx="747.3" cy="379.0" r="1.9" fill="#008000"/><circle cx="747.7" cy="379.7" r="1.9" fill="#008000"/><circle cx="748.2" cy="380.4" r="1.9" fill="#008000"/><circle cx="748.6" cy="381.0" r="1.9" fill="#008000"/><circle cx="749.0" cy="381.7" r="1.9" fill="#008000"/><circle cx="749.5" cy="382.4" r="1.9" fill="#008000"/><circle cx="749.9" cy="383.1" r="1.9" fill="#008000"/><circle cx="750.3" cy="383.7" r="1.9" fill="#008000"/><circle cx="750.7" cy="384.4" r="1.9" fill="#ffaa00"/><circle cx="751.2" cy="385.1" r="1.9" fill="#ffaa00"/><circle cx="751.6" cy="385.7" r="1.9" fill="#008000"/><circle cx="752.0" cy="386.4" r="1.9" fill="#008000"/><circle cx="752.5" cy="387.1" r="1.9" fill="#008000"/><circle cx="752.9" cy="387.8" r="1.9" fill="#008000"/><circle cx="753.3" cy="388.4" r="1.9" fill="#008000"/><circle cx="753.8" cy="389.1" r="1.9" fill="#008000"/><circle cx="754.2" cy="389.8" r="1.9" fill="#ffaa00"/><circle cx="754.6" cy="390.5" r="1.9" fill="#ffaa00"/><circle cx="755.0" cy="391.1" r="1.9" fill="#008000"/><circle cx="755.5" cy="391.8" r="1.9" fill="#008000"/><circle cx="755.9" cy="392.5" r="1.9" fill="#008000"/><circle cx="756.3" cy="393.1" r="1.9" fill="#ffaa00"/><circle cx="756.8" cy="393.8" r="1.9" fill="#ffaa00"/><circle cx="757.2" cy="394.5" r="1.9" fill="#ffaa00"/><circle cx="757.6" cy="395.2" r="1.9" fill="#ffaa00"/><circle cx="758.1" cy="395.8" r="1.9" fill="#ffaa00"/><circle cx="758.5" cy="396.5" r="1.9" fill="#ffaa00"/><circle cx="758.9" cy="397.2" r="1.9" fill="#ffaa00"/><circle cx="759.3" cy="397.9" r="1.9" fill="#ffaa00"/><circle cx="759.8" cy="398.5" r="1.9" fill="#ffaa00"/><circle cx="760.2" cy="399.2" r="1.9" fill="#ffaa00"/><circle cx="506.8" cy="419.1" r="1.9" fill="#008000"/><circle cx="507.5" cy="418.7" r="1.9" fill="#008000"/><circle cx="508.2" cy="418.2" r="1.9" fill="#008000"/><circle cx="508.8" cy="417.8" r="1.9" fill="#008000"/><circle cx="509.5" cy="417.4" r="1.9" fill="#008000"/><circle cx="510.2" cy="417.0" r="1.9" fill="#008000"/><circle cx="510.9" cy="416.5" r="1.9" fill="#008000"/><circle cx="511.6" cy="416.1" r="1.9" fill="#008000"/><circle cx="512.2" cy="415.7" r="1.9" fill="#008000"/><circle cx="512.9" cy="415.3" r="1.9" fill="#008000"/><circle cx="513.6" cy="414.9" r="1.9" fill="#008000"/><circle cx="514.3" cy="414.4" r="1.9" fill="#008000"/><circle cx="515.0" cy="414.0" r="1.9" fill="#008000"/><circle cx="515.7" cy="413.6" r="1.9" fill="#008000"/><circle cx="516.4" cy="413.2" r="1.9" fill="#008000"/><circle cx="517.0" cy="412.8" r="1.9" fill="#008000"/><circle cx="517.7" cy="412.4" r="1.9" fill="#008000"/><circle cx="518.4" cy="412.0" r="1.9" fill="#008000"/><circle cx="519.1" cy="411.5" r="1.9" fill="#008000"/><circle cx="519.8" cy="411.1" r="1.9" fill="#008000"/><circle cx="520.5" cy="410.7" r="1.9" fill="#008000"/><circle cx="521.2" cy="410.3" r="1.9" fill="#008000"/><circle cx="521.9" cy="409.9" r="1.9" fill="#008000"/><circle cx="522.6" cy="409.5" r="1.9" fill="#008000"/><circle cx="523.3" cy="409.1" r="1.9" fill="#008000"/><circle cx="524.0" cy="408.7" r="1.9" fill="#008000"/><circle cx="524.7" cy="408.3" r="1.9" fill="#008000"/><circle cx="525.4" cy="408.0" r="1.9" fill="#008000"/><circle cx="526.1" cy="407.6" r="1.9" fill="#008000"/><circle cx="526.8" cy="407.2" r="1.9" fill="#008000"/><circle cx="527.5" cy="406.8" r="1.9" fill="#008000"/><circle cx="528.2" cy="406.5" r="1.9" fill="#008000"/><circle cx="528.9" cy="406.1" r="1.9" fill="#008000"/><circle cx="529.7" cy="405.8" r="1.9" fill="#008000"/><circle cx="530.4" cy="405.4" r="1.9" fill="#008000"/><circle cx="531.1" cy="405.1" r="1.9" fill="#008000"/><circle cx="531.9" cy="404.8" r="1.9" fill="#008000"/><circle cx="532.6" cy="404.4" r="1.9" fill="#008000"/><circle cx="533.3" cy="404.1" r="1.9" fill="#008000"/><circle cx="534.1" cy="403.8" r="1.9" fill="#008000"/><circle cx="534.8" cy="403.5" r="1.9" fill="#008000"/><circle cx="535.5" cy="403.2" r="1.9" fill="#008000"/><circle cx="536.3" cy="402.8" r="1.9" fill="#008000"/><circle cx="537.0" cy="402.5" r="1.9" fill="#008000"/><circle cx="537.8" cy="402.2" r="1.9" fill="#008000"/><circle cx="538.5" cy="401.9" r="1.9" fill="#008000"/><circle cx="539.2" cy="401.7" r="1.9" fill="#008000"/><circle cx="540.0" cy="401.4" r="1.9" fill="#008000"/><circle cx="540.7" cy="401.1" r="1.9" fill="#008000"/><circle cx="541.5" cy="400.8" r="1.9" fill="#008000"/><circle cx="542.2" cy="400.5" r="1.9" fill="#008000"/><circle cx="543.0" cy="400.2" r="1.9" fill="#008000"/><circle cx="543.8" cy="400.0" r="1.9" fill="#008000"/><circle cx="544.5" cy="399.7" r="1.9" fill="#008000"/><circle cx="545.3" cy="399.5" r="1.9" fill="#008000"/><circle cx="546.0" cy="399.2" r="1.9" fill="#008000"/><circle cx="546.8" cy="398.9" r="1.9" fill="#008000"/><circle cx="547.6" cy="398.7" r="1.9" fill="#008000"/><circle cx="548.3" cy="398.4" r="1.9" fill="#008000"/><circle cx="549.1" cy="398.2" r="1.9" fill="#008000"/><circle cx="549.8" cy="397.9" r="1.9" fill="#008000"/><circle cx="550.6" cy="397.7" r="1.9" fill="#008000"/><circle cx="551.4" cy="397.4" r="1.9" fill="#008000"/><circle cx="552.1" cy="397.2" r="1.9" fill="#008000"/><circle cx="552.9" cy="397.0" r="1.9" fill="#008000"/><circle cx="553.7" cy="396.7" r="1.9" fill="#008000"/><circle cx="554.4" cy="396.5" r="1.9" fill="#008000"/><circle cx="555.2" cy="396.2" r="1.9" fill="#008000"/><circle cx="556.0" cy="396.0" r="1.9" fill="#008000"/><circle cx="556.7" cy="395.8" r="1.9" fill="#008000"/><circle cx="557.5" cy="395.5" r="1.9" fill="#008000"/><circle cx="558.3" cy="395.3" r="1.9" fill="#008000"/><circle cx="559.1" cy="395.1" r="1.9" fill="#008000"/><circle cx="559.8" cy="394.9" r="1.9" fill="#008000"/><circle cx="560.6" cy="394.7" r="1.9" fill="#008000"/><circle cx="561.4" cy="394.5" r="1.9" fill="#008000"/><circle cx="562.2" cy="394.3" r="1.9" fill="#008000"/><circle cx="562.9" cy="394.1" r="1.9" fill="#008000"/><circle cx="563.7" cy="393.9" r="1.9" fill="#008000"/><circle cx="564.5" cy="393.8" r="1.9" fill="#008000"/><circle cx="565.3" cy="393.6" r="1.9" fill="#008000"/><circle cx="566.1" cy="393.4" r="1.9" fill="#008000"/><circle cx="566.8" cy="393.2" r="1.9" fill="#008000"/><circle cx="567.6" cy="393.1" r="1.9" fill="#008000"/><circle cx="568.4" cy="392.9" r="1.9" fill="#008000"/><circle cx="569.2" cy="392.8" r="1.9" fill="#008000"/><circle cx="570.0" cy="392.6" r="1.9" fill="#008000"/><circle cx="570.8" cy="392.5" r="1.9" fill="#008000"/><circle cx="571.6" cy="392.3" r="1.9" fill="#008000"/><circle cx="572.4" cy="392.2" r="1.9" fill="#008000"/><circle cx="573.2" cy="392.0" r="1.9" fill="#008000"/><circle cx="573.9" cy="391.9" r="1.9" fill="#008000"/><circle cx="574.7" cy="391.8" r="1.9" fill="#008000"/><circle cx="575.5" cy="391.7" r="1.9" fill="#008000"/><circle cx="576.3" cy="391.5" r="1.9" fill="#008000"/><circle cx="577.1" cy="391.4" r="1.9" fill="#008000"/><circle cx="577.9" cy="391.3" r="1.9" fill="#008000"/><circle cx="578.7" cy="391.2" r="1.9" fill="#008000"/><circle cx="579.5" cy="391.1" r="1.9" fill="#008000"/><circle cx="580.3" cy="391.0" r="1.9" fill="#008000"/><circle cx="581.1" cy="390.9" r="1.9" fill="#008000"/><circle cx="581.9" cy="390.8" r="1.9" fill="#008000"/><circle cx="582.7" cy="390.7" r="1.9" fill="#008000"/><circle cx="583.5" cy="390.6" r="1.9" fill="#008000"/><circle cx="584.3" cy="390.6" r="1.9" fill="#008000"/><circle cx="585.1" cy="390.5" r="1.9" fill="#008000"/><circle cx="585.9" cy="390.4" r="1.9" fill="#008000"/><circle cx="586.7" cy="390.3" r="1.9" fill="#008000"/><circle cx="587.5" cy="390.3" r="1.9" fill="#008000"/><circle cx="588.3" cy="390.2" r="1.9" fill="#008000"/><circle cx="589.1" cy="390.2" r="1.9" fill="#008000"/><circle cx="589.9" cy="390.1" r="1.9" fill="#008000"/><circle cx="590.7" cy="390.1" r="1.9" fill="#008000"/><circle cx="591.5" cy="390.0" r="1.9" fill="#008000"/><circle cx="592.3" cy="390.0" r="1.9" fill="#008000"/><circle cx="593.1" cy="390.0" r="1.9" fill="#008000"/><circle cx="593.9" cy="389.9" r="1.9" fill="#008000"/><circle cx="594.7" cy="389.9" r="1.9" fill="#008000"/><circle cx="595.5" cy="389.8" r="1.9" fill="#008000"/><circle cx="596.3" cy="389.8" r="1.9" fill="#008000"/><circle cx="376.0" cy="429.7" r="1.9" fill="#008000"/><circle cx="376.0" cy="430.5" r="1.9" fill="#008000"/><circle cx="375.9" cy="431.3" r="1.9" fill="#008000"/><circle cx="375.9" cy="432.1" r="1.9" fill="#008000"/><circle cx="375.9" cy="432.9" r="1.9" fill="#008000"/><circle cx="375.9" cy="433.7" r="1.9" fill="#008000"/><circle cx="375.8" cy="434.5" r="1.9" fill="#008000"/><circle cx="375.8" cy="435.3" r="1.9" fill="#008000"/><circle cx="375.8" cy="436.1" r="1.9" fill="#008000"/><circle cx="375.8" cy="436.9" r="1.9" fill="#008000"/><circle cx="375.7" cy="437.7" r="1.9" fill="#008000"/><circle cx="375.7" cy="438.5" r="1.9" fill="#008000"/><circle cx="375.7" cy="439.3" r="1.9" fill="#008000"/><circle cx="375.7" cy="440.1" r="1.9" fill="#008000"/><circle cx="375.6" cy="440.9" r="1.9" fill="#008000"/><circle cx="375.6" cy="441.7" r="1.9" fill="#008000"/><circle cx="375.6" cy="442.5" r="1.9" fill="#008000"/><circle cx="375.6" cy="443.2" r="1.9" fill="#008000"/><circle cx="375.5" cy="444.0" r="1.9" fill="#008000"/><circle cx="375.5" cy="444.8" r="1.9" fill="#008000"/><circle cx="375.5" cy="445.6" r="1.9" fill="#008000"/><circle cx="375.4" cy="446.4" r="1.9" fill="#008000"/><circle cx="375.4" cy="447.2" r="1.9" fill="#008000"/><circle cx="375.4" cy="448.0" r="1.9" fill="#008000"/><circle cx="375.3" cy="448.8" r="1.9" fill="#008000"/><circle cx="375.3" cy="449.6" r="1.9" fill="#008000"/><circle cx="375.3" cy="450.4" r="1.9" fill="#008000"/><circle cx="375.3" cy="451.2" r="1.9" fill="#008000"/><circle cx="375.2" cy="452.0" r="1.9" fill="#008000"/><circle cx="375.2" cy="452.8" r="1.9" fill="#008000"/><circle cx="375.2" cy="453.6" r="1.9" fill="#008000"/><circle cx="375.1" cy="454.4" r="1.9" fill="#008000"/><circle cx="375.1" cy="455.2" r="1.9" fill="#008000"/><circle cx="375.0" cy="456.0" r="1.9" fill="#008000"/><circle cx="375.0" cy="456.8" r="1.9" fill="#008000"/><circle cx="375.0" cy="457.6" r="1.9" fill="#008000"/><circle cx="374.9" cy="458.4" r="1.9" fill="#008000"/><circle cx="374.9" cy="459.2" r="1.9" fill="#008000"/><circle cx="374.8" cy="460.0" r="1.9" fill="#008000"/><circle cx="374.8" cy="460.8" r="1.9" fill="#008000"/><circle cx="374.8" cy="461.6" r="1.9" fill="#008000"/><circle cx="374.7" cy="462.4" r="1.9" fill="#008000"/><circle cx="374.7" cy="463.2" r="1.9" fill="#008000"/><circle cx="374.6" cy="464.0" r="1.9" fill="#008000"/><circle cx="374.6" cy="464.8" r="1.9" fill="#008000"/><circle cx="374.5" cy="465.5" r="1.9" fill="#008000"/><circle cx="374.5" cy="466.3" r="1.9" fill="#008000"/><circle cx="374.4" cy="467.1" r="1.9" fill="#008000"/><circle cx="374.4" cy="467.9" r="1.9" fill="#008000"/><circle cx="374.3" cy="468.7" r="1.9" fill="#008000"/><circle cx="374.3" cy="469.5" r="1.9" fill="#008000"/><circle cx="374.2" cy="470.3" r="1.9" fill="#008000"/><circle cx="374.2" cy="471.1" r="1.9" fill="#008000"/><circle cx="374.1" cy="471.9" r="1.9" fill="#008000"/><circle cx="374.1" cy="472.7" r="1.9" fill="#008000"/><circle cx="374.0" cy="473.5" r="1.9" fill="#008000"/><circle cx="374.0" cy="474.3" r="1.9" fill="#008000"/><circle cx="373.9" cy="475.1" r="1.9" fill="#008000"/><circle cx="373.9" cy="475.9" r="1.9" fill="#008000"/><circle cx="373.8" cy="476.7" r="1.9" fill="#008000"/><circle cx="373.7" cy="477.5" r="1.9" fill="#008000"/><circle cx="373.7" cy="478.3" r="1.9" fill="#008000"/><circle cx="373.6" cy="479.1" r="1.9" fill="#008000"/><circle cx="373.6" cy="479.9" r="1.9" fill="#008000"/><circle cx="373.5" cy="480.7" r="1.9" fill="#008000"/><circle cx="373.4" cy="481.5" r="1.9" fill="#008000"/><circle cx="373.4" cy="482.3" r="1.9" fill="#008000"/><circle cx="373.3" cy="483.0" r="1.9" fill="#008000"/><circle cx="373.2" cy="483.8" r="1.9" fill="#008000"/><circle cx="373.2" cy="484.6" r="1.9" fill="#008000"/><circle cx="373.1" cy="485.4" r="1.9" fill="#008000"/><circle cx="373.0" cy="486.2" r="1.9" fill="#008000"/><circle cx="373.0" cy="487.0" r="1.9" fill="#008000"/><circle cx="372.9" cy="487.8" r="1.9" fill="#008000"/><circle cx="372.8" cy="488.6" r="1.9" fill="#008000"/><circle cx="372.7" cy="489.4" r="1.9" fill="#008000"/><circle cx="372.7" cy="490.2" r="1.9" fill="#008000"/><circle cx="372.6" cy="491.0" r="1.9" fill="#008000"/><circle cx="372.5" cy="491.8" r="1.9" fill="#008000"/><circle cx="372.4" cy="492.6" r="1.9" fill="#008000"/><circle cx="372.4" cy="493.4" r="1.9" fill="#008000"/><circle cx="372.3" cy="494.2" r="1.9" fill="#008000"/><circle cx="372.2" cy="495.0" r="1.9" fill="#008000"/><circle cx="372.1" cy="495.7" r="1.9" fill="#008000"/><circle cx="372.0" cy="496.5" r="1.9" fill="#008000"/><circle cx="372.0" cy="497.3" r="1.9" fill="#008000"/><circle cx="371.9" cy="498.1" r="1.9" fill="#008000"/><circle cx="371.8" cy="498.9" r="1.9" fill="#008000"/><circle cx="371.7" cy="499.7" r="1.9" fill="#008000"/><circle cx="371.6" cy="500.5" r="1.9" fill="#008000"/><circle cx="371.6" cy="501.3" r="1.9" fill="#008000"/><circle cx="371.5" cy="502.1" r="1.9" fill="#008000"/><circle cx="371.4" cy="502.9" r="1.9" fill="#008000"/><circle cx="371.3" cy="503.7" r="1.9" fill="#008000"/><circle cx="371.2" cy="504.5" r="1.9" fill="#008000"/><circle cx="371.1" cy="505.3" r="1.9" fill="#008000"/><circle cx="371.1" cy="506.1" r="1.9" fill="#008000"/><circle cx="371.0" cy="506.9" r="1.9" fill="#008000"/><circle cx="370.9" cy="507.6" r="1.9" fill="#008000"/><circle cx="370.8" cy="508.4" r="1.9" fill="#008000"/><circle cx="370.7" cy="509.2" r="1.9" fill="#008000"/><circle cx="370.6" cy="510.0" r="1.9" fill="#008000"/><circle cx="370.6" cy="510.8" r="1.9" fill="#008000"/><circle cx="370.5" cy="511.6" r="1.9" fill="#008000"/><circle cx="370.4" cy="512.4" r="1.9" fill="#008000"/><circle cx="370.3" cy="513.2" r="1.9" fill="#008000"/><circle cx="370.2" cy="514.0" r="1.9" fill="#008000"/><circle cx="370.1" cy="514.8" r="1.9" fill="#008000"/><circle cx="370.0" cy="515.6" r="1.9" fill="#008000"/><circle cx="369.9" cy="516.4" r="1.9" fill="#008000"/><circle cx="369.9" cy="517.2" r="1.9" fill="#008000"/><circle cx="369.8" cy="518.0" r="1.9" fill="#008000"/><circle cx="369.7" cy="518.7" r="1.9" fill="#008000"/><circle cx="369.6" cy="519.5" r="1.9" fill="#008000"/><circle cx="369.5" cy="520.3" r="1.9" fill="#008000"/><circle cx="369.4" cy="521.1" r="1.9" fill="#008000"/><circle cx="369.3" cy="521.9" r="1.9" fill="#008000"/><circle cx="369.2" cy="522.7" r="1.9" fill="#008000"/><circle cx="369.2" cy="523.5" r="1.9" fill="#008000"/><circle cx="369.1" cy="524.3" r="1.9" fill="#008000"/><circle cx="369.0" cy="525.1" r="1.9" fill="#008000"/><circle cx="368.9" cy="525.9" r="1.9" fill="#008000"/><circle cx="368.8" cy="526.7" r="1.9" fill="#008000"/><circle cx="368.7" cy="527.5" r="1.9" fill="#008000"/><circle cx="368.6" cy="528.3" r="1.9" fill="#008000"/><circle cx="368.5" cy="529.0" r="1.9" fill="#008000"/><circle cx="368.4" cy="529.8" r="1.9" fill="#008000"/><circle cx="368.4" cy="530.6" r="1.9" fill="#008000"/><circle cx="368.3" cy="531.4" r="1.9" fill="#008000"/><circle cx="368.2" cy="532.2" r="1.9" fill="#008000"/><circle cx="368.1" cy="533.0" r="1.9" fill="#008000"/><circle cx="368.0" cy="533.8" r="1.9" fill="#008000"/><circle cx="604.7" cy="485.4" r="1.9" fill="#008000"/><circle cx="605.2" cy="486.0" r="1.9" fill="#008000"/><circle cx="605.7" cy="486.7" r="1.9" fill="#008000"/><circle cx="606.1" cy="487.3" r="1.9" fill="#008000"/><circle cx="606.6" cy="488.0" r="1.9" fill="#008000"/><circle cx="607.1" cy="488.6" r="1.9" fill="#008000"/><circle cx="607.6" cy="489.3" r="1.9" fill="#008000"/><circle cx="608.1" cy="489.9" r="1.9" fill="#008000"/><circle cx="608.5" cy="490.5" r="1.9" fill="#008000"/><circle cx="609.0" cy="491.2" r="1.9" fill="#008000"/><circle cx="609.5" cy="491.8" r="1.9" fill="#008000"/><circle cx="610.0" cy="492.5" r="1.9" fill="#008000"/><circle cx="610.5" cy="493.1" r="1.9" fill="#008000"/><circle cx="610.9" cy="493.8" r="1.9" fill="#008000"/><circle cx="611.4" cy="494.4" r="1.9" fill="#008000"/><circle cx="611.9" cy="495.0" r="1.9" fill="#008000"/><circle cx="612.3" cy="495.7" r="1.9" fill="#008000"/><circle cx="612.8" cy="496.3" r="1.9" fill="#008000"/><circle cx="613.3" cy="497.0" r="1.9" fill="#008000"/><circle cx="613.8" cy="497.6" r="1.9" fill="#008000"/><circle cx="614.2" cy="498.3" r="1.9" fill="#008000"/><circle cx="614.7" cy="498.9" r="1.9" fill="#008000"/><circle cx="615.2" cy="499.6" r="1.9" fill="#008000"/><circle cx="615.6" cy="500.3" r="1.9" fill="#008000"/><circle cx="616.1" cy="500.9" r="1.9" fill="#008000"/><circle cx="616.5" cy="501.6" r="1.9" fill="#008000"/><circle cx="617.0" cy="502.2" r="1.9" fill="#008000"/><circle cx="617.5" cy="502.9" r="1.9" fill="#008000"/><circle cx="617.9" cy="503.5" r="1.9" fill="#008000"/><circle cx="618.4" cy="504.2" r="1.9" fill="#008000"/><circle cx="618.8" cy="504.9" r="1.9" fill="#008000"/><circle cx="619.3" cy="505.5" r="1.9" fill="#008000"/><circle cx="619.7" cy="506.2" r="1.9" fill="#008000"/><circle cx="620.2" cy="506.9" r="1.9" fill="#008000"/><circle cx="620.6" cy="507.5" r="1.9" fill="#008000"/><circle cx="621.0" cy="508.2" r="1.9" fill="#008000"/><circle cx="621.5" cy="508.9" r="1.9" fill="#008000"/><circle cx="621.9" cy="509.5" r="1.9" fill="#ffaa00"/><circle cx="622.4" cy="510.2" r="1.9" fill="#008000"/><circle cx="622.8" cy="510.9" r="1.9" fill="#008000"/><circle cx="623.2" cy="511.6" r="1.9" fill="#ffaa00"/><circle cx="623.6" cy="512.2" r="1.9" fill="#ffaa00"/><circle cx="624.1" cy="512.9" r="1.9" fill="#ffaa00"/><circle cx="624.5" cy="513.6" r="1.9" fill="#ffaa00"/><circle cx="624.9" cy="514.3" r="1.9" fill="#ff00ff"/><circle cx="625.3" cy="515.0" r="1.9" fill="#ff00ff"/><circle cx="625.8" cy="515.6" r="1.9" fill="#ffaa00"/><circle cx="626.2" cy="516.3" r="1.9" fill="#ffaa00"/><circle cx="626.6" cy="517.0" r="1.9" fill="#ffaa00"/><circle cx="627.0" cy="517.7" r="1.9" fill="#ffaa00"/><circle cx="627.4" cy="518.4" r="1.9" fill="#ffaa00"/><circle cx="627.8" cy="519.1" r="1.9" fill="#ffaa00"/><circle cx="628.2" cy="519.8" r="1.9" fill="#008000"/><circle cx="628.6" cy="520.5" r="1.9" fill="#008000"/><circle cx="629.0" cy="521.2" r="1.9" fill="#ffaa00"/><circle cx="629.4" cy="521.9" r="1.9" fill="#ffaa00"/><circle cx="629.8" cy="522.6" r="1.9" fill="#ffaa00"/><circle cx="630.2" cy="523.3" r="1.9" fill="#ffaa00"/><circle cx="630.6" cy="524.0" r="1.9" fill="#ffaa00"/><circle cx="630.9" cy="524.7" r="1.9" fill="#ffaa00"/><circle cx="631.3" cy="525.4" r="1.9" fill="#ffaa00"/><circle cx="631.7" cy="526.1" r="1.9" fill="#ffaa00"/><circle cx="632.1" cy="526.8" r="1.9" fill="#ffaa00"/><circle cx="632.4" cy="527.5" r="1.9" fill="#ffaa00"/><circle cx="632.8" cy="528.2" r="1.9" fill="#ffaa00"/><circle cx="633.2" cy="528.9" r="1.9" fill="#ffaa00"/><circle cx="633.6" cy="529.6" r="1.9" fill="#ffaa00"/><circle cx="633.9" cy="530.3" r="1.9" fill="#ffaa00"/><circle cx="634.3" cy="531.0" r="1.9" fill="#ffaa00"/><circle cx="634.7" cy="531.8" r="1.9" fill="#ffaa00"/><circle cx="635.1" cy="532.5" r="1.9" fill="#ffaa00"/><circle cx="635.4" cy="533.2" r="1.9" fill="#ffaa00"/><circle cx="635.8" cy="533.9" r="1.9" fill="#ffaa00"/><circle cx="636.2" cy="534.6" r="1.9" fill="#008000"/><circle cx="636.6" cy="535.3" r="1.9" fill="#008000"/><circle cx="636.9" cy="536.0" r="1.9" fill="#008000"/><circle cx="637.3" cy="536.7" r="1.9" fill="#ffaa00"/><circle cx="637.7" cy="537.4" r="1.9" fill="#ffaa00"/><circle cx="638.1" cy="538.1" r="1.9" fill="#ffaa00"/><circle cx="638.5" cy="538.8" r="1.9" fill="#ffaa00"/><circle cx="638.8" cy="539.5" r="1.9" fill="#ff00ff"/><circle cx="639.2" cy="540.2" r="1.9" fill="#ff00ff"/><circle cx="639.6" cy="540.9" r="1.9" fill="#ffaa00"/><circle cx="640.0" cy="541.7" r="1.9" fill="#ffaa00"/><circle cx="640.3" cy="542.4" r="1.9" fill="#ffaa00"/><circle cx="640.7" cy="543.1" r="1.9" fill="#ffaa00"/><circle cx="641.1" cy="543.8" r="1.9" fill="#ffaa00"/><circle cx="641.4" cy="544.5" r="1.9" fill="#ffaa00"/><circle cx="641.8" cy="545.2" r="1.9" fill="#ff00ff"/><circle cx="642.2" cy="545.9" r="1.9" fill="#ff00ff"/><circle cx="642.5" cy="546.6" r="1.9" fill="#ffaa00"/><circle cx="642.9" cy="547.4" r="1.9" fill="#ffaa00"/><circle cx="643.2" cy="548.1" r="1.9" fill="#ffaa00"/><circle cx="643.6" cy="548.8" r="1.9" fill="#ffaa00"/><circle cx="644.0" cy="549.5" r="1.9" fill="#ffaa00"/><circle cx="644.3" cy="550.2" r="1.9" fill="#ffaa00"/><circle cx="644.7" cy="551.0" r="1.9" fill="#ffaa00"/><circle cx="645.0" cy="551.7" r="1.9" fill="#ffaa00"/><circle cx="645.3" cy="552.4" r="1.9" fill="#ff00ff"/><circle cx="645.7" cy="553.1" r="1.9" fill="#ff00ff"/><circle cx="646.0" cy="553.9" r="1.9" fill="#ffaa00"/><circle cx="646.3" cy="554.6" r="1.9" fill="#ffaa00"/><circle cx="646.7" cy="555.3" r="1.9" fill="#ff00ff"/><circle cx="647.0" cy="556.1" r="1.9" fill="#ff00ff"/><circle cx="647.3" cy="556.8" r="1.9" fill="#ffaa00"/><circle cx="647.6" cy="557.5" r="1.9" fill="#ffaa00"/><circle cx="647.9" cy="558.3" r="1.9" fill="#ff00ff"/><circle cx="648.2" cy="559.0" r="1.9" fill="#ff00ff"/><circle cx="648.5" cy="559.8" r="1.9" fill="#ffaa00"/><circle cx="648.8" cy="560.5" r="1.9" fill="#ffaa00"/><circle cx="649.1" cy="561.3" r="1.9" fill="#ff00ff"/><circle cx="649.4" cy="562.0" r="1.9" fill="#ff00ff"/><circle cx="649.6" cy="562.8" r="1.9" fill="#ffaa00"/><circle cx="649.9" cy="563.5" r="1.9" fill="#ffaa00"/><circle cx="650.2" cy="564.3" r="1.9" fill="#ff00ff"/><circle cx="650.4" cy="565.0" r="1.9" fill="#ff00ff"/><circle cx="650.7" cy="565.8" r="1.9" fill="#ffaa00"/><circle cx="650.9" cy="566.6" r="1.9" fill="#ffaa00"/><circle cx="651.2" cy="567.3" r="1.9" fill="#0000ff"/><circle cx="651.5" cy="568.1" r="1.9" fill="#0000ff"/><circle cx="651.7" cy="568.8" r="1.9" fill="#0000ff"/><circle cx="652.0" cy="569.6" r="1.9" fill="#0000ff"/><circle cx="652.2" cy="570.3" r="1.9" fill="#0000ff"/><circle cx="652.5" cy="571.1" r="1.9" fill="#0000ff"/><circle cx="706.7" cy="520.0" r="1.9" fill="#ff00ff"/><circle cx="707.0" cy="520.7" r="1.9" fill="#ff00ff"/><circle cx="707.4" cy="521.4" r="1.9" fill="#ff00ff"/><circle cx="707.7" cy="522.2" r="1.9" fill="#0000ff"/><circle cx="708.1" cy="522.9" r="1.9" fill="#0000ff"/><circle cx="708.4" cy="523.6" r="1.9" fill="#0000ff"/><circle cx="708.8" cy="524.3" r="1.9" fill="#0000ff"/><circle cx="709.1" cy="525.0" r="1.9" fill="#0000ff"/><circle cx="709.5" cy="525.7" r="1.9" fill="#ff00ff"/><circle cx="709.8" cy="526.5" r="1.9" fill="#ff00ff"/><circle cx="710.2" cy="527.2" r="1.9" fill="#0000ff"/><circle cx="710.5" cy="527.9" r="1.9" fill="#0000ff"/><circle cx="710.9" cy="528.6" r="1.9" fill="#0000ff"/><circle cx="711.2" cy="529.3" r="1.9" fill="#0000ff"/><circle cx="711.5" cy="530.0" r="1.9" fill="#ff0000"/><circle cx="711.9" cy="530.8" r="1.9" fill="#ff0000"/><circle cx="712.2" cy="531.5" r="1.9" fill="#0000ff"/><circle cx="712.6" cy="532.2" r="1.9" fill="#0000ff"/><circle cx="712.9" cy="532.9" r="1.9" fill="#0000ff"/><circle cx="713.3" cy="533.6" r="1.9" fill="#0000ff"/><circle cx="713.6" cy="534.3" r="1.9" fill="#0000ff"/><circle cx="714.0" cy="535.1" r="1.9" fill="#0000ff"/><circle cx="714.3" cy="535.8" r="1.9" fill="#ff0000"/><circle cx="714.7" cy="536.5" r="1.9" fill="#ff0000"/><circle cx="715.0" cy="537.2" r="1.9" fill="#0000ff"/><circle cx="715.4" cy="537.9" r="1.9" fill="#0000ff"/><circle cx="715.7" cy="538.6" r="1.9" fill="#0000ff"/><circle cx="716.1" cy="539.3" r="1.9" fill="#0000ff"/><circle cx="716.4" cy="540.1" r="1.9" fill="#0000ff"/><circle cx="716.8" cy="540.8" r="1.9" fill="#0000ff"/><circle cx="717.1" cy="541.5" r="1.9" fill="#0000ff"/><circle cx="717.5" cy="542.2" r="1.9" fill="#0000ff"/><circle cx="717.8" cy="542.9" r="1.9" fill="#0000ff"/><circle cx="718.2" cy="543.7" r="1.9" fill="#0000ff"/><circle cx="718.5" cy="544.4" r="1.9" fill="#0000ff"/><circle cx="718.9" cy="545.1" r="1.9" fill="#0000ff"/><circle cx="719.2" cy="545.8" r="1.9" fill="#0000ff"/><circle cx="719.5" cy="546.5" r="1.9" fill="#ff00ff"/><circle cx="719.9" cy="547.3" r="1.9" fill="#ff00ff"/><circle cx="720.2" cy="548.0" r="1.9" fill="#ff00ff"/><circle cx="720.5" cy="548.7" r="1.9" fill="#ff00ff"/><circle cx="720.9" cy="549.4" r="1.9" fill="#ff00ff"/><circle cx="721.2" cy="550.1" r="1.9" fill="#ff00ff"/><circle cx="721.5" cy="550.9" r="1.9" fill="#ff00ff"/><circle cx="721.9" cy="551.6" r="1.9" fill="#ff00ff"/><circle cx="722.2" cy="552.3" r="1.9" fill="#ff00ff"/><circle cx="722.5" cy="553.0" r="1.9" fill="#ff00ff"/><circle cx="722.9" cy="553.8" r="1.9" fill="#ff00ff"/><circle cx="723.2" cy="554.5" r="1.9" fill="#ff00ff"/><circle cx="723.5" cy="555.2" r="1.9" fill="#ffaa00"/><circle cx="723.8" cy="556.0" r="1.9" fill="#ffaa00"/><circle cx="724.1" cy="556.7" r="1.9" fill="#ffaa00"/><circle cx="724.4" cy="557.4" r="1.9" fill="#ffaa00"/><circle cx="724.8" cy="558.2" r="1.9" fill="#ffaa00"/><circle cx="725.1" cy="558.9" r="1.9" fill="#ffaa00"/><circle cx="725.4" cy="559.6" r="1.9" fill="#ffaa00"/><circle cx="725.7" cy="560.4" r="1.9" fill="#ffaa00"/><circle cx="726.0" cy="561.1" r="1.9" fill="#ffaa00"/><circle cx="726.3" cy="561.8" r="1.9" fill="#ffaa00"/><circle cx="726.6" cy="562.6" r="1.9" fill="#ffaa00"/><circle cx="726.9" cy="563.3" r="1.9" fill="#ffaa00"/><circle cx="727.2" cy="564.1" r="1.9" fill="#ffaa00"/><circle cx="727.4" cy="564.8" r="1.9" fill="#ffaa00"/><circle cx="727.7" cy="565.6" r="1.9" fill="#ffaa00"/><circle cx="728.0" cy="566.3" r="1.9" fill="#ffaa00"/><circle cx="728.3" cy="567.0" r="1.9" fill="#ffaa00"/><circle cx="728.6" cy="567.8" r="1.9" fill="#ffaa00"/><circle cx="728.8" cy="568.5" r="1.9" fill="#ffaa00"/><circle cx="729.1" cy="569.3" r="1.9" fill="#ffaa00"/><circle cx="729.4" cy="570.0" r="1.9" fill="#ffaa00"/><circle cx="729.6" cy="570.8" r="1.9" fill="#ffaa00"/><circle cx="729.9" cy="571.6" r="1.9" fill="#ffaa00"/><circle cx="730.1" cy="572.3" r="1.9" fill="#ffaa00"/><circle cx="730.4" cy="573.1" r="1.9" fill="#ffaa00"/><circle cx="730.7" cy="573.8" r="1.9" fill="#ffaa00"/><circle cx="730.9" cy="574.6" r="1.9" fill="#ffaa00"/><circle cx="731.2" cy="575.3" r="1.9" fill="#ffaa00"/><circle cx="731.4" cy="576.1" r="1.9" fill="#ffaa00"/><circle cx="731.7" cy="576.8" r="1.9" fill="#ff00ff"/><circle cx="731.9" cy="577.6" r="1.9" fill="#ff00ff"/><circle cx="732.2" cy="578.3" r="1.9" fill="#ffaa00"/><circle cx="732.4" cy="579.1" r="1.9" fill="#ff00ff"/><circle cx="732.7" cy="579.9" r="1.9" fill="#ff00ff"/><circle cx="733.0" cy="580.6" r="1.9" fill="#ff00ff"/><circle cx="733.2" cy="581.4" r="1.9" fill="#ff00ff"/><circle cx="733.5" cy="582.1" r="1.9" fill="#ff00ff"/><circle cx="733.7" cy="582.9" r="1.9" fill="#0000ff"/><circle cx="734.0" cy="583.6" r="1.9" fill="#0000ff"/><circle cx="734.3" cy="584.4" r="1.9" fill="#ff00ff"/><circle cx="734.5" cy="585.1" r="1.9" fill="#ff00ff"/><circle cx="734.8" cy="585.9" r="1.9" fill="#0000ff"/><circle cx="735.1" cy="586.6" r="1.9" fill="#0000ff"/><circle cx="735.4" cy="587.4" r="1.9" fill="#0000ff"/><circle cx="735.7" cy="588.1" r="1.9" fill="#0000ff"/><circle cx="735.9" cy="588.8" r="1.9" fill="#0000ff"/><circle cx="736.2" cy="589.6" r="1.9" fill="#0000ff"/><circle cx="736.5" cy="590.3" r="1.9" fill="#0000ff"/><circle cx="736.8" cy="591.1" r="1.9" fill="#0000ff"/><circle cx="737.1" cy="591.8" r="1.9" fill="#0000ff"/><circle cx="737.3" cy="592.6" r="1.9" fill="#808080"/><circle cx="737.6" cy="593.3" r="1.9" fill="#0000ff"/><circle cx="737.9" cy="594.1" r="1.9" fill="#0000ff"/><circle cx="738.2" cy="594.8" r="1.9" fill="#ff0000"/><circle cx="738.4" cy="595.6" r="1.9" fill="#ff0000"/><circle cx="738.7" cy="596.3" r="1.9" fill="#ff0000"/><circle cx="739.0" cy="597.1" r="1.9" fill="#ff0000"/><circle cx="739.3" cy="597.8" r="1.9" fill="#0000ff"/><circle cx="739.5" cy="598.6" r="1.9" fill="#0000ff"/><circle cx="739.8" cy="599.3" r="1.9" fill="#ff0000"/><circle cx="740.1" cy="600.1" r="1.9" fill="#ff0000"/><circle cx="740.4" cy="600.8" r="1.9" fill="#808080"/><circle cx="740.6" cy="601.6" r="1.9" fill="#808080"/><circle cx="740.9" cy="602.3" r="1.9" fill="#808080"/><circle cx="476.6" cy="652.5" r="1.9" fill="#ffaa00"/><circle cx="476.8" cy="651.6" r="1.9" fill="#ffaa00"/><circle cx="476.9" cy="650.7" r="1.9" fill="#ffaa00"/><circle cx="477.1" cy="649.8" r="1.9" fill="#ffaa00"/><circle cx="477.2" cy="648.9" r="1.9" fill="#008000"/><circle cx="477.4" cy="648.1" r="1.9" fill="#ffaa00"/><circle cx="477.6" cy="647.2" r="1.9" fill="#ffaa00"/><circle cx="477.7" cy="646.3" r="1.9" fill="#ffaa00"/><circle cx="477.9" cy="645.4" r="1.9" fill="#ffaa00"/><circle cx="478.0" cy="644.5" r="1.9" fill="#ffaa00"/><circle cx="478.2" cy="643.6" r="1.9" fill="#ffaa00"/><circle cx="478.4" cy="642.7" r="1.9" fill="#ffaa00"/><circle cx="478.5" cy="641.8" r="1.9" fill="#ffaa00"/><circle cx="478.7" cy="640.9" r="1.9" fill="#ffaa00"/><circle cx="478.8" cy="640.1" r="1.9" fill="#ffaa00"/><circle cx="479.0" cy="639.2" r="1.9" fill="#008000"/><circle cx="479.2" cy="638.3" r="1.9" fill="#ffaa00"/><circle cx="479.3" cy="637.4" r="1.9" fill="#ffaa00"/><circle cx="479.5" cy="636.5" r="1.9" fill="#008000"/><circle cx="479.6" cy="635.6" r="1.9" fill="#ffaa00"/><circle cx="479.8" cy="634.7" r="1.9" fill="#ffaa00"/><circle cx="479.9" cy="633.8" r="1.9" fill="#ffaa00"/><circle cx="480.1" cy="632.9" r="1.9" fill="#ffaa00"/><circle cx="480.2" cy="632.0" r="1.9" fill="#ffaa00"/><circle cx="480.4" cy="631.1" r="1.9" fill="#ffaa00"/><circle cx="480.5" cy="630.3" r="1.9" fill="#ffaa00"/><circle cx="480.7" cy="629.4" r="1.9" fill="#ffaa00"/><circle cx="480.8" cy="628.5" r="1.9" fill="#ffaa00"/><circle cx="480.9" cy="627.6" r="1.9" fill="#ffaa00"/><circle cx="481.1" cy="626.7" r="1.9" fill="#ffaa00"/><circle cx="481.2" cy="625.8" r="1.9" fill="#ffaa00"/><circle cx="481.3" cy="624.9" r="1.9" fill="#ffaa00"/><circle cx="481.5" cy="624.0" r="1.9" fill="#ffaa00"/><circle cx="481.6" cy="623.1" r="1.9" fill="#ffaa00"/><circle cx="481.7" cy="622.2" r="1.9" fill="#008000"/><circle cx="481.9" cy="621.3" r="1.9" fill="#008000"/><circle cx="482.0" cy="620.4" r="1.9" fill="#ffaa00"/><circle cx="482.1" cy="619.5" r="1.9" fill="#ffaa00"/><circle cx="482.3" cy="618.6" r="1.9" fill="#ffaa00"/><circle cx="482.4" cy="617.8" r="1.9" fill="#ffaa00"/><circle cx="482.6" cy="616.9" r="1.9" fill="#ffaa00"/><circle cx="482.7" cy="616.0" r="1.9" fill="#ffaa00"/><circle cx="482.9" cy="615.1" r="1.9" fill="#ffaa00"/><circle cx="483.0" cy="614.2" r="1.9" fill="#ffaa00"/><circle cx="483.2" cy="613.3" r="1.9" fill="#008000"/><circle cx="483.3" cy="612.4" r="1.9" fill="#008000"/><circle cx="483.5" cy="611.5" r="1.9" fill="#ffaa00"/><circle cx="483.6" cy="610.6" r="1.9" fill="#ffaa00"/><circle cx="483.8" cy="609.7" r="1.9" fill="#ffaa00"/><circle cx="483.9" cy="608.8" r="1.9" fill="#ffaa00"/><circle cx="484.1" cy="608.0" r="1.9" fill="#ffaa00"/><circle cx="484.3" cy="607.1" r="1.9" fill="#ffaa00"/><circle cx="484.4" cy="606.2" r="1.9" fill="#008000"/><circle cx="484.6" cy="605.3" r="1.9" fill="#ffaa00"/><circle cx="484.8" cy="604.4" r="1.9" fill="#ffaa00"/><circle cx="484.9" cy="603.5" r="1.9" fill="#ffaa00"/><circle cx="485.1" cy="602.6" r="1.9" fill="#ffaa00"/><circle cx="485.3" cy="601.7" r="1.9" fill="#ffaa00"/><circle cx="485.4" cy="600.9" r="1.9" fill="#ffaa00"/><circle cx="485.6" cy="600.0" r="1.9" fill="#ffaa00"/><circle cx="485.8" cy="599.1" r="1.9" fill="#ffaa00"/><circle cx="485.9" cy="598.2" r="1.9" fill="#ffaa00"/><circle cx="486.1" cy="597.3" r="1.9" fill="#ffaa00"/><circle cx="486.3" cy="596.4" r="1.9" fill="#ffaa00"/><circle cx="486.5" cy="595.5" r="1.9" fill="#ffaa00"/><circle cx="486.6" cy="594.6" r="1.9" fill="#ffaa00"/><circle cx="486.8" cy="593.8" r="1.9" fill="#ffaa00"/><circle cx="487.0" cy="592.9" r="1.9" fill="#ffaa00"/><circle cx="487.1" cy="592.0" r="1.9" fill="#ffaa00"/><circle cx="487.3" cy="591.1" r="1.9" fill="#ffaa00"/><circle cx="487.5" cy="590.2" r="1.9" fill="#ffaa00"/><circle cx="487.6" cy="589.3" r="1.9" fill="#ffaa00"/><circle cx="487.8" cy="588.4" r="1.9" fill="#008000"/><circle cx="488.0" cy="587.5" r="1.9" fill="#008000"/><circle cx="488.1" cy="586.7" r="1.9" fill="#ffaa00"/><circle cx="488.3" cy="585.8" r="1.9" fill="#ffaa00"/><circle cx="488.5" cy="584.9" r="1.9" fill="#ffaa00"/><circle cx="488.6" cy="584.0" r="1.9" fill="#ffaa00"/><circle cx="488.8" cy="583.1" r="1.9" fill="#008000"/><circle cx="489.0" cy="582.2" r="1.9" fill="#ffaa00"/><circle cx="489.1" cy="581.3" r="1.9" fill="#ffaa00"/><circle cx="489.3" cy="580.4" r="1.9" fill="#ffaa00"/><circle cx="489.5" cy="579.5" r="1.9" fill="#ffaa00"/><circle cx="489.6" cy="578.7" r="1.9" fill="#ffaa00"/><circle cx="489.8" cy="577.8" r="1.9" fill="#008000"/><circle cx="489.9" cy="576.9" r="1.9" fill="#ffaa00"/><circle cx="490.1" cy="576.0" r="1.9" fill="#ffaa00"/><circle cx="490.2" cy="575.1" r="1.9" fill="#ffaa00"/><circle cx="490.4" cy="574.2" r="1.9" fill="#ffaa00"/><circle cx="490.5" cy="573.3" r="1.9" fill="#ffaa00"/><circle cx="490.7" cy="572.4" r="1.9" fill="#ffaa00"/><circle cx="490.8" cy="571.5" r="1.9" fill="#ffaa00"/><circle cx="491.0" cy="570.6" r="1.9" fill="#ffaa00"/><circle cx="491.1" cy="569.7" r="1.9" fill="#ffaa00"/><circle cx="491.2" cy="568.9" r="1.9" fill="#ffaa00"/><circle cx="491.4" cy="568.0" r="1.9" fill="#ffaa00"/><circle cx="491.5" cy="567.1" r="1.9" fill="#ffaa00"/><circle cx="491.7" cy="566.2" r="1.9" fill="#ffaa00"/><circle cx="491.8" cy="565.3" r="1.9" fill="#008000"/><circle cx="491.9" cy="564.4" r="1.9" fill="#008000"/><circle cx="492.1" cy="563.5" r="1.9" fill="#ffaa00"/><circle cx="492.2" cy="562.6" r="1.9" fill="#ffaa00"/><circle cx="470.8" cy="670.2" r="1.9" fill="#ffaa00"/><circle cx="470.9" cy="669.3" r="1.9" fill="#ffaa00"/><circle cx="471.1" cy="668.4" r="1.9" fill="#ffaa00"/><circle cx="471.2" cy="667.5" r="1.9" fill="#ffaa00"/><circle cx="471.3" cy="666.7" r="1.9" fill="#ffaa00"/><circle cx="471.5" cy="665.8" r="1.9" fill="#ffaa00"/><circle cx="471.6" cy="664.9" r="1.9" fill="#ffaa00"/><circle cx="471.7" cy="664.0" r="1.9" fill="#ffaa00"/><circle cx="471.8" cy="663.1" r="1.9" fill="#ffaa00"/><circle cx="472.0" cy="662.2" r="1.9" fill="#ffaa00"/><circle cx="472.1" cy="661.3" r="1.9" fill="#ffaa00"/><circle cx="472.3" cy="660.4" r="1.9" fill="#ffaa00"/><circle cx="472.4" cy="659.6" r="1.9" fill="#ffaa00"/><circle cx="472.5" cy="658.7" r="1.9" fill="#ffaa00"/><circle cx="472.7" cy="657.8" r="1.9" fill="#ffaa00"/><circle cx="472.8" cy="656.9" r="1.9" fill="#ffaa00"/><circle cx="473.0" cy="656.0" r="1.9" fill="#ffaa00"/><circle cx="473.1" cy="655.1" r="1.9" fill="#ffaa00"/><circle cx="473.3" cy="654.3" r="1.9" fill="#ffaa00"/><circle cx="473.5" cy="653.4" r="1.9" fill="#ffaa00"/><circle cx="473.6" cy="652.5" r="1.9" fill="#ffaa00"/><circle cx="473.8" cy="651.6" r="1.9" fill="#008000"/><circle cx="473.9" cy="650.7" r="1.9" fill="#ffaa00"/><circle cx="474.1" cy="649.8" r="1.9" fill="#ffaa00"/><circle cx="474.2" cy="649.0" r="1.9" fill="#ffaa00"/><circle cx="474.4" cy="648.1" r="1.9" fill="#ffaa00"/><circle cx="474.5" cy="647.2" r="1.9" fill="#ffaa00"/><circle cx="474.7" cy="646.3" r="1.9" fill="#ffaa00"/><circle cx="474.8" cy="645.4" r="1.9" fill="#ffaa00"/><circle cx="475.0" cy="644.5" r="1.9" fill="#ffaa00"/><circle cx="475.1" cy="643.7" r="1.9" fill="#ffaa00"/><circle cx="475.3" cy="642.8" r="1.9" fill="#008000"/><circle cx="475.4" cy="641.9" r="1.9" fill="#008000"/><circle cx="475.6" cy="641.0" r="1.9" fill="#ffaa00"/><circle cx="475.8" cy="640.1" r="1.9" fill="#008000"/><circle cx="475.9" cy="639.2" r="1.9" fill="#ffaa00"/><circle cx="476.1" cy="638.4" r="1.9" fill="#008000"/><circle cx="476.2" cy="637.5" r="1.9" fill="#008000"/><circle cx="476.4" cy="636.6" r="1.9" fill="#ffaa00"/><circle cx="476.6" cy="635.7" r="1.9" fill="#ffaa00"/><circle cx="476.7" cy="634.8" r="1.9" fill="#ffaa00"/><circle cx="476.9" cy="633.9" r="1.9" fill="#ffaa00"/><circle cx="477.0" cy="633.1" r="1.9" fill="#008000"/><circle cx="477.2" cy="632.2" r="1.9" fill="#ffaa00"/><circle cx="477.3" cy="631.3" r="1.9" fill="#ffaa00"/><circle cx="477.5" cy="630.4" r="1.9" fill="#ffaa00"/><circle cx="477.6" cy="629.5" r="1.9" fill="#ffaa00"/><circle cx="477.7" cy="628.6" r="1.9" fill="#ffaa00"/><circle cx="477.8" cy="627.7" r="1.9" fill="#ffaa00"/><circle cx="478.0" cy="626.9" r="1.9" fill="#ffaa00"/><circle cx="478.1" cy="626.0" r="1.9" fill="#ffaa00"/><circle cx="478.2" cy="625.1" r="1.9" fill="#ffaa00"/><circle cx="478.3" cy="624.2" r="1.9" fill="#ffaa00"/><circle cx="478.4" cy="623.3" r="1.9" fill="#ffaa00"/><circle cx="478.6" cy="622.4" r="1.9" fill="#ffaa00"/><circle cx="478.7" cy="621.5" r="1.9" fill="#ffaa00"/><circle cx="478.8" cy="620.6" r="1.9" fill="#008000"/><circle cx="479.0" cy="619.8" r="1.9" fill="#ffaa00"/><circle cx="479.1" cy="618.9" r="1.9" fill="#ffaa00"/><circle cx="479.2" cy="618.0" r="1.9" fill="#ffaa00"/><circle cx="479.4" cy="617.1" r="1.9" fill="#ffaa00"/><circle cx="479.5" cy="616.2" r="1.9" fill="#ffaa00"/><circle cx="479.7" cy="615.3" r="1.9" fill="#ffaa00"/><circle cx="479.8" cy="614.4" r="1.9" fill="#ffaa00"/><circle cx="480.0" cy="613.6" r="1.9" fill="#ffaa00"/><circle cx="480.2" cy="612.7" r="1.9" fill="#008000"/><circle cx="480.3" cy="611.8" r="1.9" fill="#ffaa00"/><circle cx="480.5" cy="610.9" r="1.9" fill="#008000"/><circle cx="480.6" cy="610.0" r="1.9" fill="#ffaa00"/><circle cx="480.8" cy="609.2" r="1.9" fill="#008000"/><circle cx="481.0" cy="608.3" r="1.9" fill="#008000"/><circle cx="481.1" cy="607.4" r="1.9" fill="#008000"/><circle cx="481.3" cy="606.5" r="1.9" fill="#008000"/><circle cx="481.4" cy="605.6" r="1.9" fill="#ffaa00"/><circle cx="481.6" cy="604.7" r="1.9" fill="#ffaa00"/><circle cx="481.7" cy="603.9" r="1.9" fill="#ffaa00"/><circle cx="481.9" cy="603.0" r="1.9" fill="#ffaa00"/><circle cx="482.0" cy="602.1" r="1.9" fill="#008000"/><circle cx="482.2" cy="601.2" r="1.9" fill="#ffaa00"/><circle cx="482.3" cy="600.3" r="1.9" fill="#008000"/><circle cx="482.5" cy="599.4" r="1.9" fill="#008000"/><circle cx="482.6" cy="598.6" r="1.9" fill="#ffaa00"/><circle cx="482.8" cy="597.7" r="1.9" fill="#ffaa00"/><circle cx="483.0" cy="596.8" r="1.9" fill="#ffaa00"/><circle cx="483.1" cy="595.9" r="1.9" fill="#ffaa00"/><circle cx="483.3" cy="595.0" r="1.9" fill="#008000"/><circle cx="483.5" cy="594.1" r="1.9" fill="#008000"/><circle cx="483.6" cy="593.3" r="1.9" fill="#008000"/><circle cx="483.8" cy="592.4" r="1.9" fill="#008000"/><circle cx="484.0" cy="591.5" r="1.9" fill="#008000"/><circle cx="484.2" cy="590.6" r="1.9" fill="#008000"/><circle cx="484.4" cy="589.8" r="1.9" fill="#008000"/><circle cx="484.6" cy="588.9" r="1.9" fill="#ffaa00"/><circle cx="484.7" cy="588.0" r="1.9" fill="#ffaa00"/><circle cx="484.9" cy="587.1" r="1.9" fill="#ffaa00"/><circle cx="485.1" cy="586.3" r="1.9" fill="#ffaa00"/><circle cx="485.3" cy="585.4" r="1.9" fill="#ffaa00"/><circle cx="485.5" cy="584.5" r="1.9" fill="#ffaa00"/><circle cx="485.7" cy="583.6" r="1.9" fill="#ffaa00"/><circle cx="485.9" cy="582.8" r="1.9" fill="#ffaa00"/><circle cx="486.2" cy="581.9" r="1.9" fill="#008000"/><circle cx="486.4" cy="581.0" r="1.9" fill="#008000"/><circle cx="486.6" cy="580.1" r="1.9" fill="#ffaa00"/><circle cx="486.8" cy="579.3" r="1.9" fill="#ffaa00"/><circle cx="487.0" cy="578.4" r="1.9" fill="#ffaa00"/><circle cx="487.2" cy="577.5" r="1.9" fill="#ffaa00"/><circle cx="487.5" cy="576.7" r="1.9" fill="#008000"/><circle cx="487.7" cy="575.8" r="1.9" fill="#008000"/><circle cx="487.9" cy="574.9" r="1.9" fill="#008000"/><circle cx="488.1" cy="574.1" r="1.9" fill="#ffaa00"/><circle cx="488.4" cy="573.2" r="1.9" fill="#ffaa00"/><circle cx="488.6" cy="572.3" r="1.9" fill="#ffaa00"/><circle cx="488.9" cy="571.5" r="1.9" fill="#ffaa00"/><circle cx="489.1" cy="570.6" r="1.9" fill="#ffaa00"/><circle cx="489.3" cy="569.7" r="1.9" fill="#ffaa00"/><circle cx="489.6" cy="568.9" r="1.9" fill="#ffaa00"/><circle cx="489.8" cy="568.0" r="1.9" fill="#ffaa00"/><circle cx="490.1" cy="567.2" r="1.9" fill="#ffaa00"/><circle cx="490.3" cy="566.3" r="1.9" fill="#ffaa00"/><circle cx="490.6" cy="565.4" r="1.9" fill="#008000"/><circle cx="490.8" cy="564.6" r="1.9" fill="#008000"/><circle cx="491.1" cy="563.7" r="1.9" fill="#ffaa00"/><circle cx="491.3" cy="562.9" r="1.9" fill="#ffaa00"/><circle cx="491.6" cy="562.0" r="1.9" fill="#ffaa00"/><rect x="469" y="671" width="3" height="1" fill="#ff00ff"/></g><g font-family="Liberation Sans, sans-serif" font-size="11" fill="#000"><text transform="translate(500.0 96.9) rotate(0) scale(0.95 1)" text-anchor="middle" y="4">N</text><text transform="translate(658.0 137.4) rotate(30) scale(0.95 1)" text-anchor="middle" y="4">30</text><text transform="translate(774.9 254.4) rotate(60) scale(0.95 1)" text-anchor="middle" y="4">60</text><text transform="translate(818.0 412.5) rotate(90) scale(0.95 1)" text-anchor="middle" y="4">E</text><text transform="translate(775.5 571.0) rotate(120) scale(0.95 1)" text-anchor="middle" y="4">120</text><text transform="translate(657.5 688.4) rotate(150) scale(0.95 1)" text-anchor="middle" y="4">150</text><text transform="translate(499.4 729.9) rotate(180) scale(0.95 1)" text-anchor="middle" y="4">S</text><text transform="translate(341.4 688.9) rotate(210) scale(0.95 1)" text-anchor="middle" y="4">210</text><text transform="translate(224.9 572.4) rotate(240) scale(0.95 1)" text-anchor="middle" y="4">240</text><text transform="translate(183.0 412.5) rotate(270) scale(0.95 1)" text-anchor="middle" y="4">W</text><text transform="translate(224.0 254.4) rotate(300) scale(0.95 1)" text-anchor="middle" y="4">300</text><text transform="translate(340.4 137.9) rotate(330) scale(0.95 1)" text-anchor="middle" y="4">330</text><rect x="502" y="151.1" width="13" height="11" fill="#fff"/><text transform="translate(502.6 160.6) scale(0.95 1)">15</text><rect x="502" y="202.2" width="13" height="11" fill="#fff"/><text transform="translate(502.6 211.7) scale(0.95 1)">30</text><rect x="502" y="253.2" width="13" height="11" fill="#fff"/><text transform="translate(502.6 262.8) scale(0.95 1)">45</text><rect x="502" y="304.3" width="13" height="11" fill="#fff"/><text transform="translate(502.6 313.8) scale(0.95 1)">60</text><rect x="502" y="355.4" width="13" height="11" fill="#fff"/><text transform="translate(502.6 364.9) scale(0.95 1)">75</text><text transform="translate(402.0 157.0) scale(0.95 1)">25</text><text transform="translate(417.0 151.6) scale(0.95 1)">13</text><text transform="translate(266.2 309.0) scale(0.95 1)">16</text><text transform="translate(666.4 275.4) scale(0.95 1)">2</text><text transform="translate(729.0 294.0) scale(0.95 1)">10</text><text transform="translate(761.1 401.6) scale(0.95 1)">5</text><text transform="translate(508.6 421.8) scale(0.95 1)">29</text><text transform="translate(377.9 433.0) scale(0.95 1)">31</text><text transform="translate(606.4 488.8) scale(0.95 1)">30</text><text transform="translate(709.2 522.9) scale(0.95 1)">12</text><text transform="translate(477.6 656.0) scale(0.95 1)">21</text><text transform="translate(472.6 673.0) scale(0.95 1)">24</text></g></svg>
<div class="abs" style="left:0;top:0;width:6px;height:6px;background:#14a0f0"></div>
<div id="title" class="abs"></div>
<div id="bl" class="abs"></div><div id="br" class="abs"></div><div id="bb" class="abs"></div>
<!-- app icon -->
<svg class="abs" style="left:6px;top:8px" width="16" height="16" viewBox="0 0 16 16" shape-rendering="crispEdges"><rect x="3" y="0" width="2" height="1" fill="#ffffff"/><rect x="10" y="0" width="4" height="1" fill="#ffffff"/><rect x="14" y="0" width="1" height="1" fill="#101010"/><rect x="2" y="1" width="1" height="1" fill="#ffffff"/><rect x="3" y="1" width="3" height="1" fill="#20b8ec"/><rect x="7" y="1" width="2" height="1" fill="#101010"/><rect x="9" y="1" width="1" height="1" fill="#ffffff"/><rect x="10" y="1" width="3" height="1" fill="#20b8ec"/><rect x="13" y="1" width="1" height="1" fill="#ffffff"/><rect x="14" y="1" width="1" height="1" fill="#101010"/><rect x="1" y="2" width="1" height="1" fill="#101010"/><rect x="2" y="2" width="3" height="1" fill="#20b8ec"/><rect x="5" y="2" width="1" height="1" fill="#ffffff"/><rect x="6" y="2" width="3" height="1" fill="#20b8ec"/><rect x="9" y="2" width="1" height="1" fill="#ffffff"/><rect x="10" y="2" width="3" height="1" fill="#20b8ec"/><rect x="13" y="2" width="1" height="1" fill="#ffffff"/><rect x="14" y="2" width="1" height="1" fill="#101010"/><rect x="2" y="3" width="1" height="1" fill="#101010"/><rect x="3" y="3" width="2" height="1" fill="#20b8ec"/><rect x="5" y="3" width="1" height="1" fill="#ffffff"/><rect x="6" y="3" width="2" height="1" fill="#20b8ec"/><rect x="8" y="3" width="1" height="1" fill="#0c80d0"/><rect x="9" y="3" width="1" height="1" fill="#ffffff"/><rect x="10" y="3" width="2" height="1" fill="#20b8ec"/><rect x="12" y="3" width="1" height="1" fill="#0c80d0"/><rect x="13" y="3" width="1" height="1" fill="#0a50b0"/><rect x="14" y="3" width="1" height="1" fill="#101010"/><rect x="2" y="4" width="1" height="1" fill="#101010"/><rect x="3" y="4" width="1" height="1" fill="#20b8ec"/><rect x="4" y="4" width="1" height="1" fill="#0c80d0"/><rect x="5" y="4" width="1" height="1" fill="#ffffff"/><rect x="6" y="4" width="1" height="1" fill="#20b8ec"/><rect x="7" y="4" width="2" height="1" fill="#0c80d0"/><rect x="9" y="4" width="1" height="1" fill="#ffffff"/><rect x="10" y="4" width="1" height="1" fill="#20b8ec"/><rect x="11" y="4" width="2" height="1" fill="#0c80d0"/><rect x="13" y="4" width="1" height="1" fill="#0a50b0"/><rect x="14" y="4" width="1" height="1" fill="#101010"/><rect x="2" y="5" width="1" height="1" fill="#ffffff"/><rect x="3" y="5" width="2" height="1" fill="#0c80d0"/><rect x="5" y="5" width="1" height="1" fill="#ffffff"/><rect x="6" y="5" width="1" height="1" fill="#ff1010"/><rect x="7" y="5" width="2" height="1" fill="#0c80d0"/><rect x="9" y="5" width="2" height="1" fill="#ffffff"/><rect x="11" y="5" width="2" height="1" fill="#0c80d0"/><rect x="13" y="5" width="1" height="1" fill="#ffffff"/><rect x="14" y="5" width="1" height="1" fill="#f0e878"/><rect x="2" y="6" width="4" height="1" fill="#ffffff"/><rect x="6" y="6" width="1" height="1" fill="#ff1010"/><rect x="7" y="6" width="2" height="1" fill="#101010"/><rect x="9" y="6" width="1" height="1" fill="#ffffff"/><rect x="10" y="6" width="1" height="1" fill="#ff1010"/><rect x="11" y="6" width="3" height="1" fill="#ffffff"/><rect x="1" y="7" width="2" height="1" fill="#ff1010"/><rect x="3" y="7" width="1" height="1" fill="#ffffff"/><rect x="4" y="7" width="3" height="1" fill="#ff1010"/><rect x="7" y="7" width="2" height="1" fill="#ffffff"/><rect x="9" y="7" width="3" height="1" fill="#ff1010"/><rect x="12" y="7" width="2" height="1" fill="#ffffff"/><rect x="1" y="8" width="1" height="1" fill="#f0e878"/><rect x="2" y="8" width="1" height="1" fill="#ffffff"/><rect x="3" y="8" width="3" height="1" fill="#ff1010"/><rect x="6" y="8" width="2" height="1" fill="#ffffff"/><rect x="8" y="8" width="7" height="1" fill="#ff1010"/><rect x="0" y="9" width="1" height="1" fill="#101010"/><rect x="1" y="9" width="1" height="1" fill="#ffffff"/><rect x="2" y="9" width="3" height="1" fill="#ff1010"/><rect x="5" y="9" width="2" height="1" fill="#ffffff"/><rect x="7" y="9" width="3" height="1" fill="#ff1010"/><rect x="10" y="9" width="2" height="1" fill="#ffffff"/><rect x="12" y="9" width="3" height="1" fill="#ff1010"/><rect x="15" y="9" width="1" height="1" fill="#f0e878"/><rect x="1" y="10" width="1" height="1" fill="#ffffff"/><rect x="2" y="10" width="2" height="1" fill="#ff1010"/><rect x="4" y="10" width="3" height="1" fill="#909090"/><rect x="7" y="10" width="1" height="1" fill="#ffffff"/><rect x="8" y="10" width="2" height="1" fill="#ff1010"/><rect x="10" y="10" width="3" height="1" fill="#909090"/><rect x="13" y="10" width="1" height="1" fill="#ffffff"/><rect x="1" y="11" width="1" height="1" fill="#101010"/><rect x="2" y="11" width="1" height="1" fill="#ff1010"/><rect x="3" y="11" width="1" height="1" fill="#ffffff"/><rect x="4" y="11" width="1" height="1" fill="#909090"/><rect x="5" y="11" width="1" height="1" fill="#101010"/><rect x="6" y="11" width="1" height="1" fill="#909090"/><rect x="7" y="11" width="1" height="1" fill="#ffffff"/><rect x="8" y="11" width="1" height="1" fill="#ff1010"/><rect x="9" y="11" width="1" height="1" fill="#ffffff"/><rect x="10" y="11" width="1" height="1" fill="#909090"/><rect x="11" y="11" width="2" height="1" fill="#101010"/><rect x="13" y="11" width="1" height="1" fill="#ffffff"/><rect x="2" y="12" width="3" height="1" fill="#ffffff"/><rect x="5" y="12" width="1" height="1" fill="#909090"/><rect x="6" y="12" width="2" height="1" fill="#ffffff"/><rect x="8" y="12" width="1" height="1" fill="#101010"/><rect x="9" y="12" width="2" height="1" fill="#ffffff"/><rect x="11" y="12" width="1" height="1" fill="#909090"/><rect x="12" y="12" width="1" height="1" fill="#101010"/><rect x="13" y="12" width="1" height="1" fill="#f0e878"/><rect x="2" y="13" width="2" height="1" fill="#ffffff"/><rect x="4" y="13" width="1" height="1" fill="#f0e878"/><rect x="5" y="13" width="2" height="1" fill="#ffffff"/><rect x="7" y="13" width="1" height="1" fill="#909090"/><rect x="8" y="13" width="4" height="1" fill="#ffffff"/><rect x="12" y="13" width="1" height="1" fill="#101010"/><rect x="2" y="14" width="1" height="1" fill="#101010"/><rect x="3" y="14" width="2" height="1" fill="#f0e878"/><rect x="5" y="14" width="1" height="1" fill="#101010"/><rect x="6" y="14" width="2" height="1" fill="#ffffff"/><rect x="8" y="14" width="2" height="1" fill="#101010"/><rect x="10" y="14" width="2" height="1" fill="#f0e878"/><rect x="12" y="14" width="1" height="1" fill="#101010"/><rect x="3" y="15" width="2" height="1" fill="#101010"/><rect x="6" y="15" width="2" height="1" fill="#101010"/><rect x="10" y="15" width="2" height="1" fill="#101010"/></svg>
<div id="ttext" class="abs">C:\Download\rtklog\97\rover.obs</div>
<div class="abs cb" style="left:926px"><div class="abs" style="left:4px;top:12px;width:7px;height:3px;background:#fff"></div></div>
<div class="abs cb" style="left:949px"><div class="abs" style="left:4px;top:4px;width:11px;height:11px;box-sizing:border-box;border:1px solid #fff;border-top-width:3px"></div></div>
<div class="abs cb" id="close" style="left:972px"><svg class="abs" style="left:0;top:0" width="19" height="19" viewBox="0 0 19 19"><path d="M5 5 L14 14 M14 5 L5 14" stroke="#fff" stroke-width="2.2" stroke-linecap="butt"/></svg></div>

<div id="menu" class="abs"><span style="left:5px">File</span><span style="left:33px">Edit</span><span style="left:64px">View</span><span style="left:97px">Help</span></div>
<div id="wl" class="abs"></div>
<div id="tool" class="abs">
 <!-- pressed button 1 -->
 <div class="abs sunk dither" style="left:2px;top:1px;width:20px;height:20px"></div>
 <div class="abs" style="left:8px;top:6px;width:11px;height:11px;box-sizing:border-box;border:1px solid #a8a8b4;background:#fff;font-size:9px;font-weight:bold;line-height:9px;text-align:center">1</div>
 <div class="abs" style="left:30px;top:5px;font-size:9.5px;line-height:11px;color:#aca899;text-shadow:1px 1px 0 #fff">2</div>
 <div class="abs" style="left:48px;top:5px;font-size:9.5px;line-height:11px;color:#aca899;text-shadow:1px 1px 0 #fff;letter-spacing:-0.7px">1·2</div>
 <!-- combos -->
 <div class="abs combo" style="left:64px;top:1px;width:76px;height:20px"><span class="abs" style="left:3px;top:4px;font-size:11px;line-height:13px">Skyplot</span>
  <div class="abs btn3d" style="left:57px;top:1px;width:16px;height:16px"><div class="abs" style="left:4px;top:6px;width:0;height:0;border:4px solid transparent;border-top-color:#000;border-bottom:0;border-left-width:3.5px;border-right-width:3.5px"></div></div></div>
 <div class="abs combo" style="left:144px;top:1px;width:48px;height:20px"><div class="abs" style="left:2px;top:2px;width:26px;height:14px;background:#316ac5;outline:1px dotted #e8b44e;outline-offset:-1px"></div><span class="abs" style="left:3px;top:4px;font-size:11px;line-height:13px;color:#fff">L1</span>
  <div class="abs btn3d" style="left:29px;top:1px;width:16px;height:16px"><div class="abs" style="left:4px;top:6px;width:0;height:0;border:4px solid transparent;border-top-color:#000;border-bottom:0;border-left-width:3.5px;border-right-width:3.5px"></div></div></div>
 <!-- icons -->
 <svg class="abs" style="left:196px;top:0" width="130" height="21" viewBox="200 50 130 21">
  <rect x="210" y="60" width="3" height="3" fill="#fff"/><rect x="209" y="59" width="3" height="3" fill="#a29f91"/>
  <g fill="#fff" transform="translate(1 1)"><path d="M225 60.5 L228 58 V63 Z M236 60.5 L233 58 V63 Z"/><rect x="227" y="60" width="7" height="1"/>
   <path d="M250.5 55 L248 58 H253 Z M250.5 66 L248 63 H253 Z"/><rect x="250" y="57" width="1" height="7"/></g>
  <g fill="#a29f91"><path d="M224.8 60.5 L228 57.8 V63.2 Z M236.2 60.5 L233 57.8 V63.2 Z"/><rect x="227" y="59.8" width="7" height="1.4"/>
   <path d="M250.5 54.8 L247.8 58 H253.2 Z M250.5 66.2 L247.8 63 H253.2 Z"/><rect x="249.8" y="57" width="1.4" height="7"/></g>
  <circle cx="276.5" cy="60.5" r="4" fill="none" stroke="#000" stroke-width="1.2" stroke-dasharray="1.6 0.5"/><circle cx="276.5" cy="60.5" r="1.7" fill="#000"/>
  <circle cx="297.3" cy="61.3" r="2.5" fill="none" stroke="#fff" stroke-width="1"/>
  <circle cx="296.5" cy="60.5" r="2.5" fill="none" stroke="#a29f91" stroke-width="1"/><rect x="296" y="60" width="1" height="1" fill="#a29f91"/>
  <path d="M315.5 58.5 V64.5 M315.5 58.8 L319.8 61.5 L315.5 64.2" stroke="#fff" stroke-width="1" fill="none"/>
  <path d="M314.5 57.5 V63.5 M314.5 57.8 L318.8 60.5 L314.5 63.2" stroke="#b4b4be" stroke-width="1" fill="none"/>
 </svg>
 <!-- scrollbar -->
 <div class="abs" style="left:325px;top:3px;width:127px;height:16px;box-sizing:border-box;border:1px solid;border-color:#aca899 #fff #fff #aca899"></div>
 <div class="abs dither" style="left:326px;top:4px;width:125px;height:14px"></div>
 <div class="abs btn3d" style="left:326px;top:4px;width:17px;height:14px"><div class="abs" style="left:5px;top:3px;width:0;height:0;border:3px solid transparent;border-right:3.5px solid #000;border-left:0"></div></div>
 <div class="abs btn3d" style="left:343px;top:4px;width:17px;height:14px"></div>
 <div class="abs btn3d" style="left:434px;top:4px;width:17px;height:14px"><div class="abs" style="left:6px;top:3px;width:0;height:0;border:3px solid transparent;border-left:3.5px solid #000;border-right:0"></div></div>
 <!-- refresh -->
 <svg class="abs" style="left:976px;top:6px" width="9" height="9" viewBox="0 0 9 9" shape-rendering="crispEdges"><rect x="0" y="0" width="1" height="1" fill="#000"/><rect x="3" y="0" width="1" height="1" fill="#000"/><rect x="4" y="0" width="1" height="1" fill="#000"/><rect x="5" y="0" width="1" height="1" fill="#000"/><rect x="6" y="0" width="1" height="1" fill="#000"/><rect x="0" y="1" width="1" height="1" fill="#000"/><rect x="1" y="1" width="1" height="1" fill="#000"/><rect x="7" y="1" width="1" height="1" fill="#000"/><rect x="0" y="2" width="1" height="1" fill="#000"/><rect x="1" y="2" width="1" height="1" fill="#000"/><rect x="2" y="2" width="1" height="1" fill="#000"/><rect x="8" y="2" width="1" height="1" fill="#888"/><rect x="0" y="3" width="1" height="1" fill="#000"/><rect x="1" y="3" width="1" height="1" fill="#000"/><rect x="0" y="4" width="1" height="1" fill="#000"/><rect x="8" y="4" width="1" height="1" fill="#000"/><rect x="7" y="5" width="1" height="1" fill="#000"/><rect x="8" y="5" width="1" height="1" fill="#000"/><rect x="0" y="6" width="1" height="1" fill="#888"/><rect x="5" y="6" width="1" height="1" fill="#000"/><rect x="6" y="6" width="1" height="1" fill="#000"/><rect x="7" y="6" width="1" height="1" fill="#000"/><rect x="8" y="6" width="1" height="1" fill="#000"/><rect x="1" y="7" width="1" height="1" fill="#000"/><rect x="7" y="7" width="1" height="1" fill="#000"/><rect x="8" y="7" width="1" height="1" fill="#000"/><rect x="2" y="8" width="1" height="1" fill="#000"/><rect x="3" y="8" width="1" height="1" fill="#000"/><rect x="4" y="8" width="1" height="1" fill="#000"/><rect x="5" y="8" width="1" height="1" fill="#000"/><rect x="8" y="8" width="1" height="1" fill="#000"/></svg>
</div>

<div id="status" class="abs">
 <div class="abs sp" style="left:1px;width:830px;top:0"></div>
 <div class="abs sp" style="left:834px;width:157px;top:0"></div>
 <span class="abs st" style="left:1px;letter-spacing:-0.02px">[1]2010/04/07 00:00:00-04/07 01:00:00 GPST : EP=72000 N=846046</span>
 <span class="abs st" style="left:343px;color:#008000">SNR=&gt;45</span>
 <span class="abs st" style="left:398px;color:#ffaa00">&gt;40</span>
 <span class="abs st" style="left:424px;color:#ff00ff">&gt;35</span>
 <span class="abs st" style="left:450px;color:#0000ff">&gt;30</span>
 <span class="abs st" style="left:476px;color:#ff0000">&gt;25</span>
 <span class="abs st" style="left:502px;color:#808080">&lt;25</span>
 <span class="abs st" style="left:834px;width:155px;text-align:center">AZ=306.3° EL=52.5°</span>
</div>
</body>
</html>
